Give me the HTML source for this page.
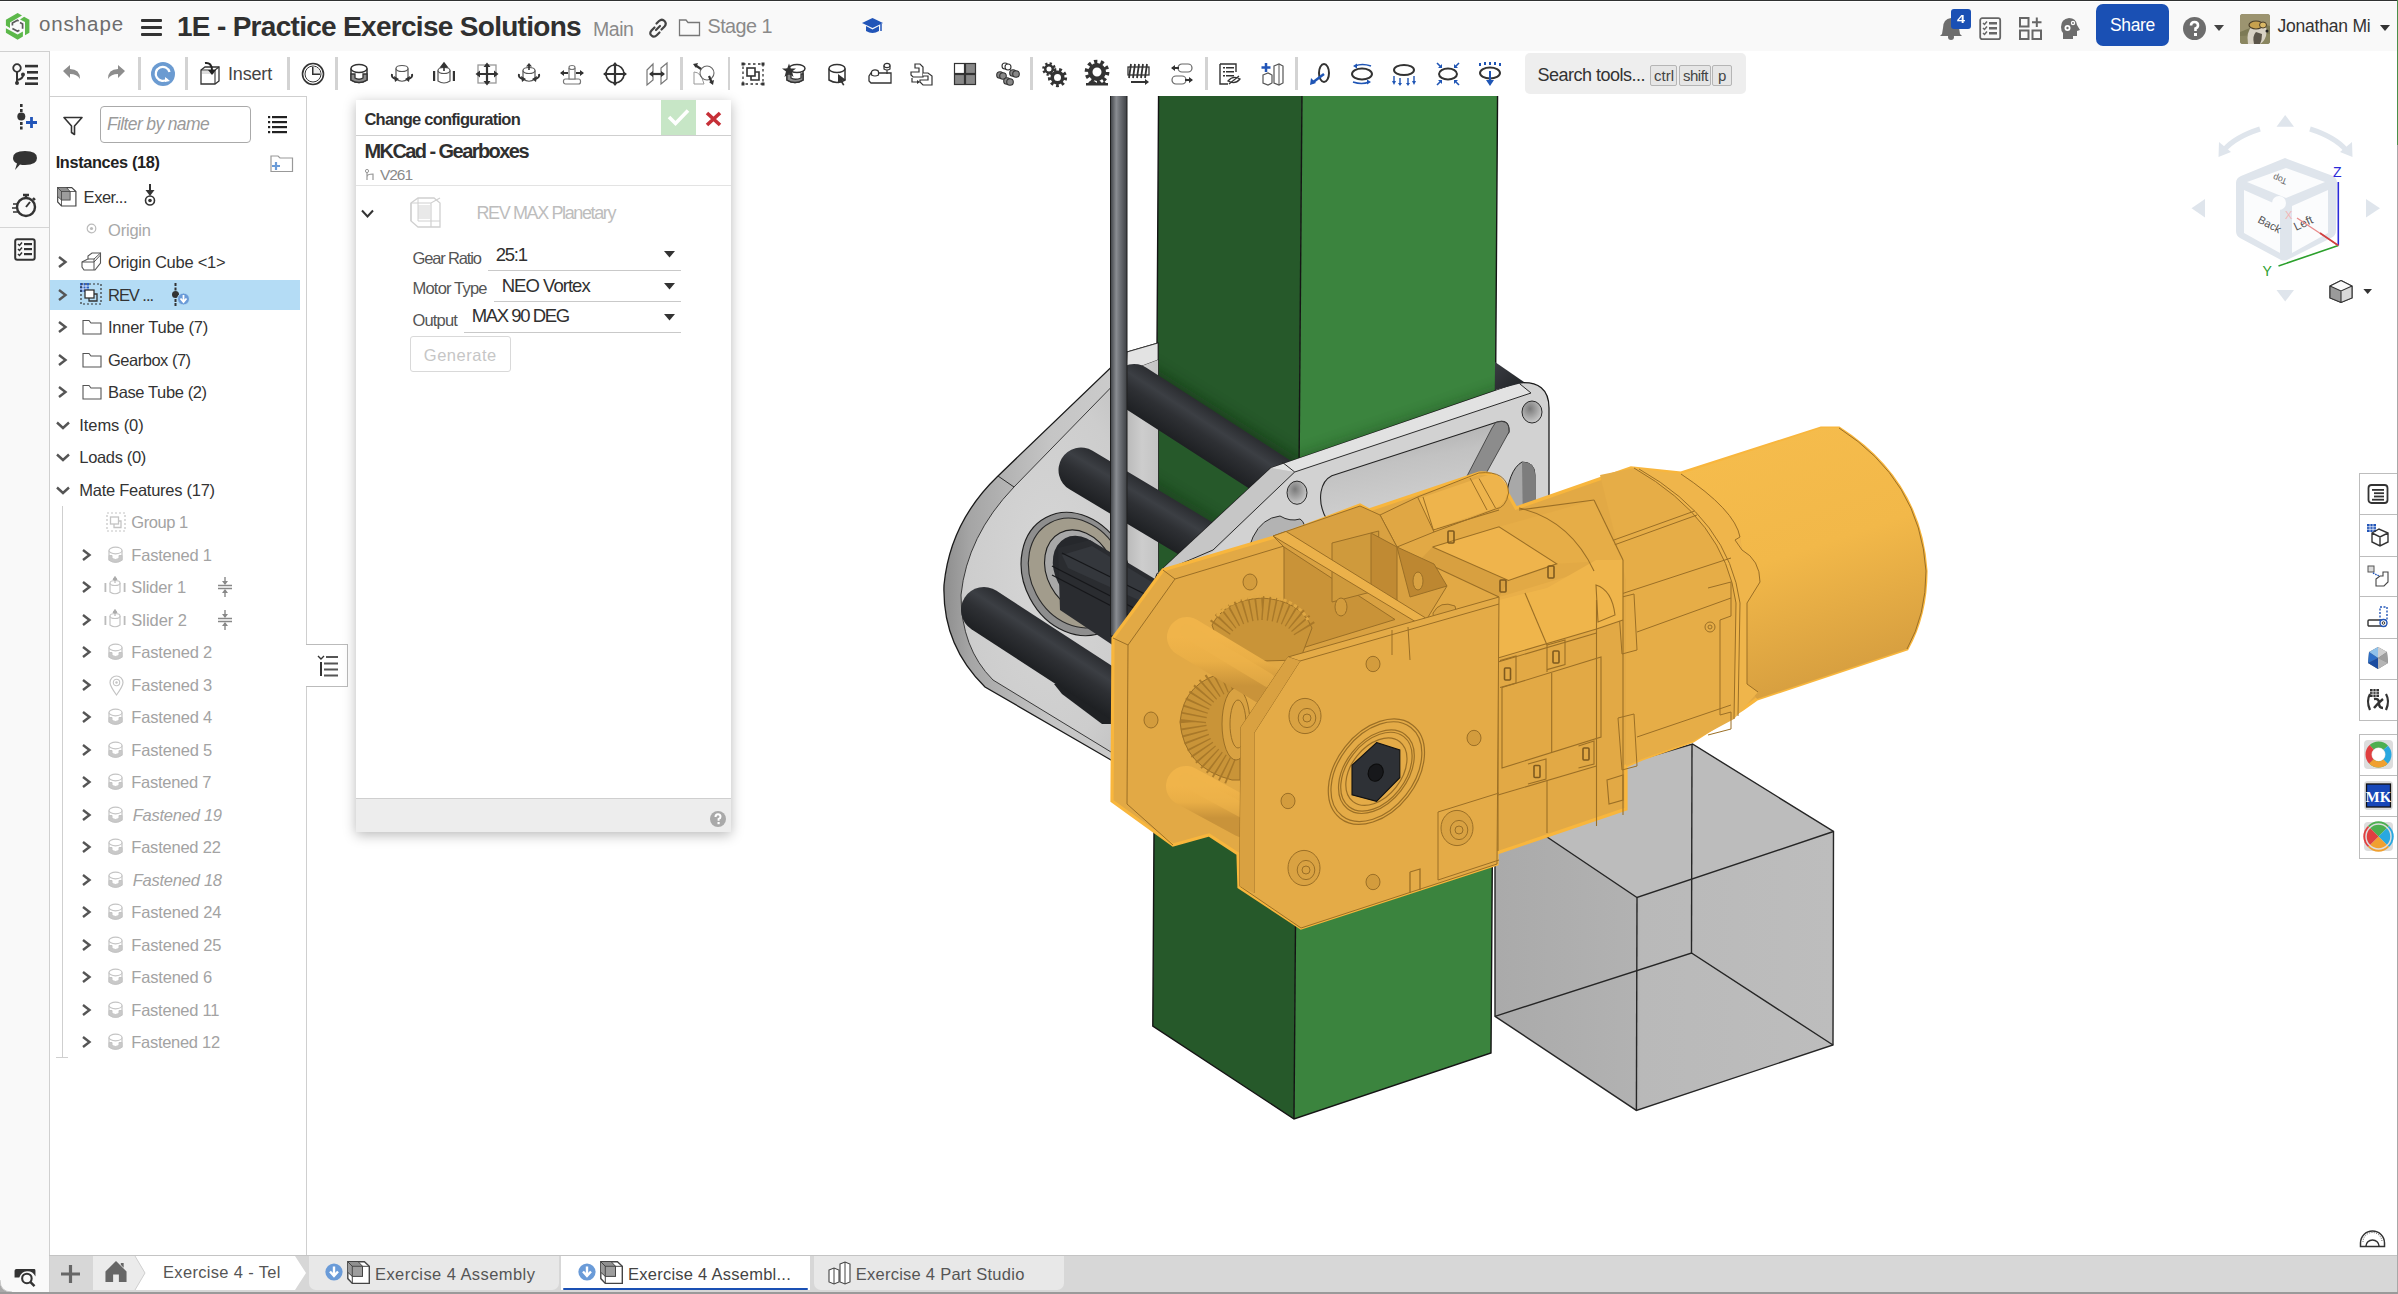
<!DOCTYPE html><html><head><meta charset="utf-8"><style>
html,body{margin:0;padding:0}
body{width:2398px;height:1294px;overflow:hidden;position:relative;background:#fff;font-family:"Liberation Sans", sans-serif}
.t{position:absolute;white-space:nowrap}
svg{overflow:visible}
</style></head><body><svg style="position:absolute;left:0;top:0" width="2398" height="1294"><defs>
<linearGradient id="rod" x1="0" y1="0" x2="1" y2="0"><stop offset="0" stop-color="#3f4246"/><stop offset="0.35" stop-color="#8a8d92"/><stop offset="0.6" stop-color="#6a6d72"/><stop offset="1" stop-color="#3d4044"/></linearGradient>
<linearGradient id="rim" x1="0" y1="0" x2="1" y2="0"><stop offset="0" stop-color="#8e8e8e"/><stop offset="0.12" stop-color="#a5a5a5"/><stop offset="0.5" stop-color="#c5c5c5"/><stop offset="1" stop-color="#cfcfcf"/></linearGradient>
<radialGradient id="face" cx="0.45" cy="0.5" r="0.6"><stop offset="0" stop-color="#d6d6d6"/><stop offset="0.7" stop-color="#cdcdcd"/><stop offset="1" stop-color="#c0c0c0"/></radialGradient>
<linearGradient id="cubeg" x1="0" y1="0" x2="1" y2="0"><stop offset="0" stop-color="#aaaaaa"/><stop offset="0.42" stop-color="#b2b2b2"/><stop offset="0.43" stop-color="#b9b9b9"/><stop offset="1" stop-color="#bdbdbd"/></linearGradient>
<linearGradient id="motor" x1="0" y1="0" x2="0.3" y2="1"><stop offset="0" stop-color="#f6bd4d"/><stop offset="0.55" stop-color="#f2b849"/><stop offset="1" stop-color="#d8a040"/></linearGradient>
<linearGradient id="cut" x1="0" y1="0" x2="0" y2="1"><stop offset="0" stop-color="#9c9c9c"/><stop offset="0.5" stop-color="#c4c4c4"/><stop offset="1" stop-color="#d6d6d6"/></linearGradient>
<linearGradient id="rodg" x1="0" y1="0" x2="0" y2="1"><stop offset="0" stop-color="#2a2c30"/><stop offset="0.5" stop-color="#3b3e43"/><stop offset="1" stop-color="#222427"/></linearGradient>
<linearGradient id="ocyl" x1="0" y1="0" x2="0" y2="1"><stop offset="0" stop-color="#f0b44a"/><stop offset="0.5" stop-color="#e9ae46"/><stop offset="1" stop-color="#c9933a"/></linearGradient>
</defs><polygon points="1495,802 1692.5,744 1833.5,831.5 1833,1045 1636.4,1110.4 1495,1016.3" fill="url(#cubeg)"/><polygon points="1495,802 1692.5,744 1833.5,831.5 1637,897.5" fill="#bcbcbc"/><g stroke="#262626" stroke-width="1.4" fill="none"><polygon points="1495,802 1692.5,744 1833.5,831.5 1833,1045 1636.4,1110.4 1495,1016.3"/><polyline points="1495,802 1637,897.5 1833.5,831.5"/><line x1="1637" y1="897.5" x2="1636.4" y2="1110.4"/><polyline points="1495,1016.3 1691.5,953 1833,1045"/><line x1="1692" y1="744" x2="1691.5" y2="953"/></g><polygon points="1158.6,90 1302,90 1294,1119 1152.8,1026" fill="#26592a"/><polygon points="1302,90 1497.6,90 1491,1053 1294,1119" fill="#3b843e"/><g stroke="#141414" stroke-width="1.4" fill="none"><polyline points="1158.6,90 1152.8,1026 1294,1119 1491,1053 1497.6,90"/><line x1="1302" y1="90" x2="1294" y2="1119"/></g><defs><filter id="blur8" x="-50%" y="-50%" width="200%" height="200%"><feGaussianBlur stdDeviation="7"/></filter><clipPath id="tL"><polygon points="1158.6,90 1302,90 1294,1119 1152.8,1026"/></clipPath><clipPath id="tR"><polygon points="1302,90 1497.6,90 1491,1053 1294,1119"/></clipPath></defs><g clip-path="url(#tL)"><line x1="1140" y1="370" x2="1300" y2="470" stroke="#0c2a0f" stroke-width="18" opacity="0.55" filter="url(#blur8)"/><line x1="1081" y1="445" x2="1230" y2="535" stroke="#0c2a0f" stroke-width="14" opacity="0.45" filter="url(#blur8)"/></g><g clip-path="url(#tR)"><line x1="1290" y1="468" x2="1520" y2="390" stroke="#123a16" stroke-width="16" opacity="0.45" filter="url(#blur8)"/></g><path d="M1158,343 L1127,352 L998,476 Q950,522 944,585 Q942,645 985,687 L1111,760 L1158,788 Z" fill="url(#rim)" stroke="#1a1a1a" stroke-width="1.3"/><path d="M1158,360 L1126,372 L1014,487 Q967,536 961,595 Q961,648 993,680 L1111,752 L1158,780 Z" fill="url(#face)" stroke="#3a3a3a" stroke-width="1"/><path d="M998,476 L1014,487" stroke="#2a2a2a" stroke-width="1"/><polygon points="1127,352 1158,343 1158,360 1126,372" fill="#e3e3e3" stroke="#2a2a2a" stroke-width="0.8"/><defs><linearGradient id="strip" x1="0" y1="0" x2="1" y2="0"><stop offset="0" stop-color="#b9b9b9"/><stop offset="0.5" stop-color="#cdcdcd"/><stop offset="1" stop-color="#c4c4c4"/></linearGradient></defs><polygon points="1126,372 1158,360 1158,800 1126,800" fill="url(#strip)"/><ellipse cx="1076" cy="574" rx="52" ry="64" transform="rotate(-28 1076 574)" fill="#8e8e8e" stroke="#1e1e1e" stroke-width="1.2"/><ellipse cx="1077" cy="573" rx="46" ry="57" transform="rotate(-28 1077 573)" fill="#a29c8c" stroke="#2a2a2a" stroke-width="1.1"/><ellipse cx="1080" cy="571" rx="33" ry="43" transform="rotate(-28 1080 571)" fill="#a8a8a8" stroke="#1e1e1e" stroke-width="1.1"/><ellipse cx="1082" cy="570" rx="27" ry="36" transform="rotate(-28 1082 570)" fill="#26282c"/><polygon points="1058,548 1090,540 1165,585 1165,660 1120,650 1060,610" fill="#2a2c30"/><polygon points="1062,555 1092,546 1165,590 1165,612 1068,568" fill="#34373c"/><g stroke="#16171a" stroke-width="1.3"><line x1="1052" y1="566" x2="1165" y2="624"/><line x1="1052" y1="575" x2="1165" y2="634"/><line x1="1062" y1="553" x2="1165" y2="604"/></g><defs><linearGradient id="rg1" gradientUnits="userSpaceOnUse" x1="1146.5" y1="367.7" x2="1121.5" y2="406.3"><stop offset="0" stop-color="#2b2d31"/><stop offset="0.3" stop-color="#3c3f44"/><stop offset="0.55" stop-color="#2e3034"/><stop offset="1" stop-color="#1e2023"/></linearGradient></defs><line x1="1134" y1="387" x2="1300" y2="494" stroke="url(#rg1)" stroke-width="46" stroke-linecap="round"/><defs><linearGradient id="rg2" gradientUnits="userSpaceOnUse" x1="1092.5" y1="450.7" x2="1069.5" y2="489.3"><stop offset="0" stop-color="#2b2d31"/><stop offset="0.3" stop-color="#3c3f44"/><stop offset="0.55" stop-color="#2e3034"/><stop offset="1" stop-color="#1e2023"/></linearGradient></defs><line x1="1081" y1="470" x2="1230" y2="559" stroke="url(#rg2)" stroke-width="45" stroke-linecap="round"/><polygon points="1054,684 1062,694 1102,724 1112,724 1112,680" fill="#1f2124"/><defs><linearGradient id="rg3" gradientUnits="userSpaceOnUse" x1="996.5" y1="590.7" x2="971.5" y2="629.3"><stop offset="0" stop-color="#2b2d31"/><stop offset="0.3" stop-color="#3c3f44"/><stop offset="0.55" stop-color="#2e3034"/><stop offset="1" stop-color="#1e2023"/></linearGradient></defs><line x1="984" y1="610" x2="1130" y2="705" stroke="url(#rg3)" stroke-width="46" stroke-linecap="round"/><path d="M1271,468 L1518,383 Q1549,380 1549,408 L1549,560 L1300,650 L1130,650 L1157,574 Z" fill="#d2d2d2" stroke="#1a1a1a" stroke-width="1.3"/><polygon points="1271,468 1518,383 1531,393 1294.7,472" fill="#e2e2e2"/><polygon points="1271,468 1294.7,472 1215,550 1157,590 1157,574" fill="#c6c6c6"/><path d="M1282,462 L1294.7,472 L1531,393 L1520,384 M1294.7,472 L1213,550 M1157,574 L1213,550" fill="none" stroke="#2a2a2a" stroke-width="1"/><defs><linearGradient id="cut2" x1="0" y1="0" x2="0.3" y2="1"><stop offset="0" stop-color="#a3a3a3"/><stop offset="0.45" stop-color="#c2c2c2"/><stop offset="1" stop-color="#d3d3d3"/></linearGradient></defs><path d="M1331.8,475.7 L1495.7,422.4 Q1510,418 1509,432 L1472,476 L1420,520 L1335,530 Q1318,512 1321,492 Q1323,480 1331.8,475.7 Z" fill="url(#cut2)" stroke="#222" stroke-width="1.1"/><path d="M1495.7,422.4 Q1510,418 1509,432 L1478,488 L1466,478 L1492,428 Z" fill="#8c8c8c" stroke="#333" stroke-width="0.8"/><path d="M1505.5,505 Q1508,470 1522,462 Q1535,462 1535,475 L1535,530 L1505,530 Z" fill="#a8a8a8" stroke="#222" stroke-width="1"/><path d="M1522,462 Q1535,462 1535,475 L1535,530 L1523,530 Z" fill="#7d7d7d"/><path d="M1253,537 Q1262,518 1280,516 Q1290,522 1300,519 Q1306,522 1307,540 L1250,545 Z" fill="#b3b3b3" stroke="#2a2a2a" stroke-width="1"/><defs><radialGradient id="hole" cx="0.4" cy="0.35" r="0.7"><stop offset="0" stop-color="#7a7a7a"/><stop offset="1" stop-color="#cfcfcf"/></radialGradient></defs><ellipse cx="1297" cy="492.7" rx="10" ry="11.6" fill="url(#hole)" stroke="#2a2a2a" stroke-width="1"/><ellipse cx="1532" cy="412" rx="10" ry="11" fill="url(#hole)" stroke="#2a2a2a" stroke-width="1"/><defs><linearGradient id="rend" x1="0" y1="0" x2="1" y2="1"><stop offset="0" stop-color="#3a3d42"/><stop offset="1" stop-color="#202226"/></linearGradient></defs><polygon points="1495,362 1524,382 1518,384 1495,390" fill="url(#rend)"/><rect x="1110.5" y="90" width="16.5" height="546" fill="url(#rod)" stroke="#1e1e1e" stroke-width="1"/><path d="M1163,570 L1113,638 L1112,801 L1173,845 L1209,835 L1238,854 L1239,887 L1301,928 L1497,864 L1497,853 L1626,809 L1626,766 L1642,759 L1693,741 L1743,709 L1757,699 L1907,649 Q1926,615 1926,571 Q1920,480 1839,428 L1821,428 L1681,473 L1631,468 L1516,508 L1508,494 Q1503,472 1479,473 L1369,510 L1360,505 L1278,536 Z" fill="#e2a945" stroke="#f8b63d" stroke-width="3.2"/><path d="M1681,474 L1821,428 L1839,428 Q1920,480 1926,571 Q1926,615 1907,649 L1757,699 L1747,684 L1747,603 L1760,582 Q1760,560 1742,550 L1740,537 Q1735,510 1681,474 Z" fill="url(#motor)"/><path d="M1839,428 Q1920,480 1926,571 Q1926,615 1907,649" fill="none" stroke="#9b6f26" stroke-width="1"/><path d="M1600,475 L1634,468 Q1725,520 1736,603 L1734,719 L1693,741 L1642,759 L1626,766 L1626,580 Z" fill="#e6ad47"/><path d="M1634,468 L1681,474 Q1735,510 1740,537 L1742,550 Q1760,560 1760,582 L1747,603 L1747,684 L1758,692 L1734,719 L1736,603 Q1725,520 1634,468 Z" fill="#efb54b"/><g fill="none" stroke="#9b6f26" stroke-width="1"><path d="M1634,468 Q1725,520 1736,603 L1734,719"/><path d="M1639,469 Q1729,520 1740,603 L1738,716"/><path d="M1681,474 Q1735,510 1740,537 L1735,540 L1742,550 Q1760,560 1760,582 L1747,603 L1747,684 L1758,692"/><line x1="1600" y1="545" x2="1694.6" y2="511"/><line x1="1603" y1="549" x2="1697" y2="515"/><line x1="1618" y1="595" x2="1731" y2="558"/><line x1="1637" y1="632" x2="1731" y2="598"/><line x1="1637" y1="737" x2="1731" y2="705"/><path d="M1618,598 L1634,594 L1637,650 L1622,654 Z M1618,718 L1634,714 L1637,766 L1622,770 Z M1708,588 L1731,582 L1731,616 L1720,620 L1720,715 L1731,712 L1731,729 L1708,735"/><circle cx="1710" cy="627" r="5"/><circle cx="1710" cy="627" r="2"/></g><polygon points="1499,597 1622,560 1622,619 1547,645 1499,659" fill="#e9af49"/><polygon points="1432.5,547 1499,526.8 1556.7,563.8 1508.5,580.5" fill="#efb44c"/><polygon points="1420,560 1432.5,547 1508.5,580.5 1499,597" fill="#d8a040"/><polygon points="1499,526.8 1594,500 1622,560 1556.7,563.8" fill="#e6ad47"/><polygon points="1499,600 1547,588 1596,560 1623,560 1623,620 1596.5,629 1498,658" fill="#efb54b"/><g fill="none" stroke="#9b6f26" stroke-width="1.1"><polyline points="1498,597 1498,851"/><line x1="1596.5" y1="600" x2="1596.5" y2="826"/><line x1="1623" y1="560" x2="1623" y2="815"/><line x1="1525" y1="593" x2="1547" y2="645"/><line x1="1498" y1="658" x2="1596.5" y2="629"/><line x1="1498" y1="662" x2="1596.5" y2="633"/><line x1="1596.5" y1="629" x2="1623" y2="620"/><polygon points="1502,687.5 1601,657 1601,737 1502,768"/><line x1="1551.7" y1="673" x2="1551.7" y2="752"/><line x1="1547" y1="645" x2="1547" y2="672"/><line x1="1498" y1="795" x2="1596.5" y2="766"/><line x1="1547" y1="781" x2="1547" y2="833"/><polyline points="1500,660.6 1516,656 1516,683 1500,687.5"/><polyline points="1547,645 1565,640 1565,664.6 1547,669.6"/><polyline points="1578.5,746 1594,741 1594,764 1578.5,768"/><polyline points="1528,764 1546,759 1546,779 1528,784"/><polyline points="1432.5,547 1499,526.8 1556.7,563.8 1508.5,580.5 1432.5,547"/><line x1="1420" y1="560" x2="1499" y2="597"/><line x1="1400" y1="540" x2="1499" y2="510"/><line x1="1519" y1="510" x2="1594" y2="500"/><line x1="1594" y1="500" x2="1623" y2="560"/><path d="M1519,508 Q1570,520 1594,571"/><path d="M1596,585 Q1612,590 1615,615 L1598,622 Z"/><path d="M1607,780 L1623,775 L1623,800 L1609,804 Z"/></g><rect x="1448" y="531" width="6" height="12" rx="1" fill="none" stroke="#7f5a1e" stroke-width="1.6"/><rect x="1500" y="580" width="6" height="12" rx="1" fill="none" stroke="#7f5a1e" stroke-width="1.6"/><rect x="1548" y="566" width="6" height="12" rx="1" fill="none" stroke="#7f5a1e" stroke-width="1.6"/><rect x="1504.5" y="668" width="6" height="12" rx="1" fill="none" stroke="#7f5a1e" stroke-width="1.6"/><rect x="1553" y="651" width="6" height="12" rx="1" fill="none" stroke="#7f5a1e" stroke-width="1.6"/><rect x="1583" y="748" width="6" height="12" rx="1" fill="none" stroke="#7f5a1e" stroke-width="1.6"/><rect x="1534" y="765.5" width="6" height="12" rx="1" fill="none" stroke="#7f5a1e" stroke-width="1.6"/><line x1="1426" y1="514" x2="1490" y2="492" stroke="#eeb44c" stroke-width="34" stroke-linecap="round"/><path d="M1417.6,497 L1478.8,473 Q1508,470 1508.5,493 Q1506,508 1495.5,509 L1434,532" fill="none" stroke="#9b6f26" stroke-width="1"/><path d="M1423,497 L1434,532 M1479,478.5 L1495.5,508 M1470,478 L1487,510" fill="none" stroke="#9b6f26" stroke-width="1"/><path d="M1380,515 L1417.6,497 L1434,532 L1397,547 Z" fill="#e0a744" stroke="#9b6f26" stroke-width="1"/><g fill="none" stroke="#9b6f26" stroke-width="1"><polyline points="1163,570 1175,579 1128,645 1127,804 1173,845"/><line x1="1113" y1="638" x2="1128" y2="645"/><line x1="1175" y1="579" x2="1284" y2="546"/></g><ellipse cx="1151" cy="720" rx="7" ry="8" fill="#d39c3d" stroke="#9b6f26" stroke-width="1"/><ellipse cx="1250" cy="582" rx="7" ry="8" fill="#d39c3d" stroke="#9b6f26" stroke-width="1"/><path d="M1273,536 L1360,506 L1369,510 L1380,515 L1397,547 L1447,586 L1425,622 L1300,660 L1284,547 Z" fill="#d9a141" stroke="#9b6f26" stroke-width="1"/><polygon points="1284,547 1395,619.5 1304.5,647.3 1284,627" fill="#c99338" stroke="#9b6f26" stroke-width="1"/><polygon points="1332,543 1378.7,531 1378.7,590 1332,602" fill="#cf9a3c" stroke="#9b6f26" stroke-width="1"/><polygon points="1371,533 1397,547 1397,600 1371,590" fill="#c08a33" stroke="#9b6f26" stroke-width="1"/><polygon points="1273,536 1286,531.4 1425,617.6 1421,625" fill="#ebb14a" stroke="#9b6f26" stroke-width="1"/><polygon points="1397,547 1434,564 1447,586 1410,597" fill="#bd8731" stroke="#9b6f26" stroke-width="1"/><ellipse cx="1418" cy="581" rx="5" ry="9" fill="#d9a242" stroke="#9b6f26" stroke-width="1"/><ellipse cx="1341" cy="607" rx="6" ry="9" fill="#d39c3d" stroke="#9b6f26" stroke-width="1"/><path d="M1433,613 Q1440,600 1455,606 L1462,640 Q1450,660 1436,645 Z" fill="#d9a242" stroke="#9b6f26" stroke-width="1"/><circle cx="1459" cy="632" r="7" fill="none" stroke="#9b6f26"/><path d="M1212,625 Q1225,600 1262,598 Q1300,600 1312,628 L1300,660 L1225,662 Z" fill="#c99438" stroke="#9b6f26" stroke-width="1"/><path d="M1220,628 Q1232,610 1262,608 Q1294,610 1305,630" fill="none" stroke="#a57628" stroke-width="24" stroke-dasharray="1.6,4.4" opacity="0.9"/><path d="M1217,616 Q1232,598 1262,596 Q1296,598 1308,620" fill="none" stroke="#e0a843" stroke-width="3" stroke-dasharray="3.5,2.5"/><path d="M1228,672 Q1184,680 1180,722 Q1184,768 1232,780 L1240,780 L1240,672 Z" fill="#c99438" stroke="#9b6f26" stroke-width="1"/><path d="M1230,678 Q1196,688 1193,722 Q1196,758 1232,772" fill="none" stroke="#a57628" stroke-width="26" stroke-dasharray="1.6,4.4" opacity="0.9"/><ellipse cx="1236" cy="724" rx="14" ry="36" fill="#d9a242" stroke="#9b6f26" stroke-width="1"/><ellipse cx="1238" cy="724" rx="8" ry="24" fill="none" stroke="#9b6f26" stroke-width="1"/><line x1="1187" y1="637" x2="1268" y2="686" stroke="url(#ocyl)" stroke-width="40" stroke-linecap="round"/><line x1="1187" y1="631" x2="1268" y2="680" stroke="#efb44b" stroke-width="14" stroke-linecap="round" opacity="0.55"/><line x1="1186" y1="786" x2="1245" y2="818" stroke="url(#ocyl)" stroke-width="40" stroke-linecap="round"/><line x1="1186" y1="780" x2="1245" y2="812" stroke="#efb44b" stroke-width="14" stroke-linecap="round" opacity="0.55"/><path d="M1288,657 L1241,727 L1239.5,886 L1301,928 L1497,864 L1499,597 Z" fill="#e4ab47" stroke="#9b6f26" stroke-width="1"/><path d="M1288,657 L1300,661 L1254,733 L1254,893 M1300,661 L1499,604" fill="none" stroke="#9b6f26" stroke-width="1"/><polygon points="1288,657 1300,661 1254,733 1254,893 1239.5,886 1241,727" fill="#d9a141"/><g fill="none" stroke="#9b6f26" stroke-width="1.2"><ellipse cx="1376.4" cy="771.7" rx="40" ry="59" transform="rotate(38 1376.4 771.7)"/><ellipse cx="1376.4" cy="771.7" rx="37.5" ry="56" transform="rotate(38 1376.4 771.7)"/><ellipse cx="1376.4" cy="771.7" rx="31" ry="47" transform="rotate(38 1376.4 771.7)"/><ellipse cx="1376.4" cy="771.7" rx="29" ry="44.5" transform="rotate(38 1376.4 771.7)"/><ellipse cx="1376.4" cy="771.7" rx="25" ry="38" transform="rotate(38 1376.4 771.7)"/></g><polygon points="1376.6,742.5 1399.8,750 1399.8,777.7 1376.6,801.4 1352,794.9 1352,765.2" fill="#2e3136" stroke="#111" stroke-width="1.1"/><ellipse cx="1375.7" cy="772.6" rx="7.4" ry="8.8" transform="rotate(20 1375.7 772.6)" fill="#17181b" stroke="#0c0c0c" stroke-width="1"/><ellipse cx="1305" cy="716" rx="16" ry="17.6" fill="#d9a242" stroke="#9b6f26" stroke-width="1"/><ellipse cx="1307" cy="718" rx="8.8" ry="9.6" fill="none" stroke="#9b6f26" stroke-width="1"/><circle cx="1307" cy="718" r="4.0" fill="none" stroke="#9b6f26"/><ellipse cx="1457" cy="828" rx="16" ry="17.6" fill="#d9a242" stroke="#9b6f26" stroke-width="1"/><ellipse cx="1459" cy="830" rx="8.8" ry="9.6" fill="none" stroke="#9b6f26" stroke-width="1"/><circle cx="1459" cy="830" r="4.0" fill="none" stroke="#9b6f26"/><ellipse cx="1304" cy="868" rx="16" ry="17.6" fill="#d9a242" stroke="#9b6f26" stroke-width="1"/><ellipse cx="1306" cy="870" rx="8.8" ry="9.6" fill="none" stroke="#9b6f26" stroke-width="1"/><circle cx="1306" cy="870" r="4.0" fill="none" stroke="#9b6f26"/><ellipse cx="1373" cy="664" rx="7" ry="7.700000000000001" fill="#d39c3d" stroke="#9b6f26" stroke-width="1"/><ellipse cx="1474" cy="738" rx="7" ry="7.700000000000001" fill="#d39c3d" stroke="#9b6f26" stroke-width="1"/><ellipse cx="1288" cy="801" rx="7" ry="7.700000000000001" fill="#d39c3d" stroke="#9b6f26" stroke-width="1"/><ellipse cx="1373" cy="882" rx="7" ry="7.700000000000001" fill="#d39c3d" stroke="#9b6f26" stroke-width="1"/><path d="M1410,872 L1420,869 L1420,890 M1410,872 L1410,893" fill="none" stroke="#9b6f26" stroke-width="1.3"/><path d="M1438,812 L1438,880 L1499,860 M1438,812 L1499,793" fill="none" stroke="#9b6f26" stroke-width="1"/><path d="M1408,627 L1410,660 M1392,630 L1392,655" fill="none" stroke="#9b6f26" stroke-width="1"/></svg><div style="position:absolute;left:0px;top:0px;width:2398px;height:51px;background:#f9f9f9"></div><div style="position:absolute;left:0px;top:0px;width:2398px;height:1px;background:#303232"></div><div style="position:absolute;left:0px;top:1px;width:2398px;height:1px;background:#fff"></div><svg style="position:absolute;left:0px;top:8px;" width="40" height="38" viewBox="0 8 40 38"><g fill="#5cb84a"><polygon points="5.9,19.7 17.6,13 22,15.5 10,22.4 10,28 5.9,25.6"/><polygon points="20,19.5 24.1,16.8 29.4,19.7 29.4,32.7 25,35.3 25,22.1"/><polygon points="5.9,28.3 17.6,34.4 22.9,31.6 22.9,36.5 17.6,39.7 5.9,32.7"/></g>
<g fill="none" stroke="#5a5a5a" stroke-width="1.7" stroke-linejoin="miter"><polyline points="12.4,25.4 12.4,23 17.4,20.3 18.6,21"/><polyline points="20,22.6 22.6,24.1 22.6,28.8"/><polyline points="12.4,28.4 17.6,31.3 19.4,30.3"/></g></svg><div class="t" style="left:39px;top:14.1px;font-size:20.5px;line-height:20.5px;color:#6d6d6d;font-weight:normal;font-style:normal;letter-spacing:0.9058370535714276px;">onshape</div><div style="position:absolute;left:141px;top:19px;width:21px;height:3.3px;background:#333;border-radius:1px"></div><div style="position:absolute;left:141px;top:26px;width:21px;height:3.3px;background:#333;border-radius:1px"></div><div style="position:absolute;left:141px;top:33px;width:21px;height:3.3px;background:#333;border-radius:1px"></div><div class="t" style="left:177px;top:13.3px;font-size:28px;line-height:28px;color:#303030;font-weight:bold;font-style:normal;letter-spacing:-0.7007031250000004px;">1E - Practice Exercise Solutions</div><div class="t" style="left:593px;top:19.5px;font-size:19.5px;line-height:19.5px;color:#8a8a8a;font-weight:normal;font-style:normal;letter-spacing:-0.4419433593749993px;">Main</div><svg style="position:absolute;left:647px;top:17px;" width="22" height="22" viewBox="0 0 22 22"><g fill="none" stroke="#444" stroke-width="2.2" stroke-linecap="round"><path d="M9,13 L13,9"/><path d="M7.5,10.5 L4.5,13.5 Q2,16.5 4.5,18.5 Q7,21 10,18 L12.5,15.5"/><path d="M9.5,6.5 L12,4 Q15,1.5 17.5,4 Q20,6.5 17.5,9.5 L14.5,12.5"/></g></svg><svg style="position:absolute;left:678px;top:17px;" width="23" height="20" viewBox="0 0 23 20"><path d="M1.5,3 L8,3 L10,5.5 L21.5,5.5 L21.5,18.5 L1.5,18.5 Z" fill="none" stroke="#777" stroke-width="1.3"/></svg><div class="t" style="left:707.5px;top:17.4px;font-size:19.8px;line-height:19.8px;color:#8a8a8a;font-weight:normal;font-style:normal;letter-spacing:-0.5367723214285718px;">Stage 1</div><svg style="position:absolute;left:861px;top:16px;" width="23" height="21" viewBox="0 0 23 21"><path d="M11.5,2 L22,7 L11.5,12 L1,7 Z" fill="#2255b8"/><path d="M5,10 L5,15 Q11.5,19 18,15 L18,10 L11.5,13.5 Z" fill="#2255b8"/><path d="M20,8 L20,15" stroke="#2255b8" stroke-width="1.5"/></svg><svg style="position:absolute;left:1939px;top:16px;" width="24" height="24" viewBox="0 0 24 24"><path d="M12,2 Q4,3 4,12 L3,18 L1,20 L23,20 L21,18 L20,12 Q20,3 12,2 Z" fill="#6d6d6d"/><circle cx="12" cy="21" r="3" fill="#6d6d6d"/></svg><div style="position:absolute;left:1951px;top:9px;width:20px;height:20px;background:#1a50b4;border-radius:3px"></div><div class="t" style="left:1957px;top:13.6px;font-size:11.5px;line-height:11.5px;color:#fff;font-weight:bold;font-style:normal;letter-spacing:0px;transform:scaleX(1.2508);transform-origin:0 0;">4</div><svg style="position:absolute;left:1979px;top:17px;" width="23" height="23" viewBox="0 0 23 23"><rect x="1.2" y="1.2" width="20" height="21" rx="2" fill="none" stroke="#666" stroke-width="1.8"/><g stroke="#666" stroke-width="1.5" fill="none"><path d="M4,6 L5.5,7.5 L8,4.5 M4,11 L5.5,12.5 L8,9.5 M4,16 L5.5,17.5 L8,14.5"/></g><g fill="#666"><rect x="10" y="5" width="8" height="2.5"/><rect x="10" y="10" width="8" height="2.5"/><rect x="10" y="15" width="8" height="2.5"/></g></svg><svg style="position:absolute;left:2019px;top:17px;" width="24" height="24" viewBox="0 0 24 24"><g fill="none" stroke="#666" stroke-width="2"><rect x="1" y="1" width="8.5" height="8.5"/><rect x="1" y="13.5" width="8.5" height="8.5"/><rect x="13.5" y="13.5" width="8.5" height="8.5"/><path d="M17.8,0.5 L17.8,10 M13,5.2 L22.5,5.2"/></g></svg><svg style="position:absolute;left:2060px;top:17px;" width="22" height="23" viewBox="0 0 22 23"><path d="M9,1 Q1,2 1,10 Q1,14 3,16 L3,22 L13,22 L13,19 L17,19 L17,14 L20,13 L17,8 Q16,1 9,1 Z" fill="#6d6d6d"/><circle cx="7.5" cy="11" r="3" fill="#fff"/><circle cx="7.5" cy="11" r="1.2" fill="#6d6d6d"/><circle cx="13" cy="6" r="2.2" fill="#fff"/><circle cx="13" cy="6" r="0.9" fill="#6d6d6d"/></svg><div style="position:absolute;left:2096px;top:4px;width:73px;height:42px;background:#1a50b4;border-radius:7px"></div><div class="t" style="left:2110px;top:17.4px;font-size:17.5px;line-height:17.5px;color:#fff;font-weight:normal;font-style:normal;letter-spacing:-0.34007812499999945px;">Share</div><svg style="position:absolute;left:2183px;top:17px;" width="23" height="23" viewBox="0 0 23 23"><circle cx="11.5" cy="11.5" r="11.5" fill="#6d6d6d"/><path d="M8,8.5 Q8,5 11.5,5 Q15,5 15,8.3 Q15,10.5 12.5,11.5 L12.5,14" fill="none" stroke="#fff" stroke-width="2.6"/><rect x="11" y="16" width="3" height="3" fill="#fff"/></svg><svg style="position:absolute;left:2214px;top:25px;" width="11" height="6" viewBox="0 0 11 6"><path d="M0,0 L10,0 L5,6 Z" fill="#444"/></svg><svg style="position:absolute;left:2240px;top:14px;" width="30" height="30" viewBox="0 0 30 30"><defs><clipPath id="avc"><rect x="0" y="0" width="30" height="30" rx="3"/></clipPath></defs><g clip-path="url(#avc)"><rect width="30" height="30" fill="#7d7a55"/><path d="M0,0 L30,0 L30,12 Q20,8 10,14 L0,18 Z" fill="#9c9470"/><path d="M0,22 L30,20 L30,30 L0,30 Z" fill="#8a8660"/><path d="M8,30 Q6,18 12,12 Q18,6 24,10 Q28,14 26,22 Q24,28 20,30 Z" fill="#d8d2c4"/><path d="M14,30 Q12,22 16,18 L22,20 Q22,26 20,30 Z" fill="#5b5549"/><ellipse cx="16" cy="11" rx="7" ry="4" fill="#c7a14e" stroke="#4b3f2a" stroke-width="1.2"/><ellipse cx="23" cy="11" rx="3.5" ry="3" fill="#d9b865" stroke="#4b3f2a" stroke-width="1"/><circle cx="27" cy="17" r="1.5" fill="#222"/></g></svg><div class="t" style="left:2277.5px;top:18.4px;font-size:17.5px;line-height:17.5px;color:#333;font-weight:normal;font-style:normal;letter-spacing:-0.2125532670454543px;">Jonathan Mi</div><svg style="position:absolute;left:2380px;top:25px;" width="11" height="6" viewBox="0 0 11 6"><path d="M0,0 L10,0 L5,6 Z" fill="#333"/></svg><div style="position:absolute;left:2397px;top:0px;width:1px;height:145px;background:#4a8f4a"></div><div style="position:absolute;left:2397px;top:145px;width:1px;height:1149px;background:#a8a8a8"></div><div style="position:absolute;left:50px;top:51px;width:2346px;height:45px;background:#fff"></div><div style="position:absolute;left:0px;top:51px;width:49px;height:1243px;background:#f9f9f9;border-top:1px solid #d0d0d0;box-sizing:border-box"></div><div style="position:absolute;left:49px;top:51px;width:1px;height:1243px;background:#d0d0d0"></div><svg style="position:absolute;left:0px;top:1280px;" width="12" height="14" viewBox="0 0 12 14"><path d="M0,0 Q0,12 12,12 L12,14 L0,14 Z" fill="#a9a9a9"/><path d="M0,0 Q0,12 12,12" fill="none" stroke="#c8c8c8" stroke-width="1"/></svg><svg style="position:absolute;left:12px;top:63px;" width="26" height="22" viewBox="0 0 26 22"><circle cx="5" cy="5" r="3.8" fill="none" stroke="#333" stroke-width="1.8"/><path d="M5,9 L5,20 M5,17 Q11,16 11,12" fill="none" stroke="#333" stroke-width="2"/><circle cx="5" cy="20" r="2" fill="#333"/><circle cx="11" cy="11.5" r="2" fill="#333"/><g fill="#333"><rect x="13" y="1.8" width="13" height="2.6"/><rect x="15" y="8" width="11" height="2.6"/><rect x="15" y="14" width="11" height="2.6"/><rect x="13" y="19.4" width="13" height="2.6"/></g></svg><svg style="position:absolute;left:59.5px;top:61.5px;" width="24" height="24" viewBox="0 0 24 24"><path d="M3,9 L10,3 L10,7 Q20,7 20,17 Q17,12 10,12 L10,16 Z" fill="#8d8d8d"/></svg><svg style="position:absolute;left:103.5px;top:61.5px;" width="24" height="24" viewBox="0 0 24 24"><path d="M21,9 L14,3 L14,7 Q4,7 4,17 Q7,12 14,12 L14,16 Z" fill="#8d8d8d"/></svg><div style="position:absolute;left:138px;top:57px;width:2.5px;height:33px;background:#d3d3d3"></div><svg style="position:absolute;left:150.5px;top:61.5px;" width="24" height="24" viewBox="0 0 24 24"><circle cx="12" cy="12" r="12" fill="#6b9bd1"/><path d="M16.5,17 A7,7 0 1 1 18.5,10" fill="none" stroke="#fff" stroke-width="2.3"/><path d="M14,15 L19,19 L14,20 Z" fill="#fff"/></svg><div style="position:absolute;left:185px;top:57px;width:2.5px;height:33px;background:#d3d3d3"></div><svg style="position:absolute;left:199px;top:61px;" width="22" height="24" viewBox="0 0 22 24"><path d="M2,9 L6,6 L20,6 L20,20 L16,23 L2,23 Z" fill="#fff" stroke="#333" stroke-width="1.3"/><path d="M2,9 L16,9 L16,23 M16,9 L20,6" fill="none" stroke="#333" stroke-width="1.1"/><rect x="3" y="10" width="12" height="3" fill="#ddd"/><path d="M6,2 Q13,1 13,10" fill="none" stroke="#222" stroke-width="2"/><path d="M9,9 L13,14 L17,9 Z" fill="#222"/></svg><div class="t" style="left:228px;top:65.1px;font-size:18px;line-height:18px;color:#444;font-weight:normal;font-style:normal;letter-spacing:-0.16971354166666686px;">Insert</div><div style="position:absolute;left:287px;top:57px;width:2.5px;height:33px;background:#d3d3d3"></div><svg style="position:absolute;left:300.5px;top:61.5px;" width="24" height="24" viewBox="0 0 24 24"><circle cx="12" cy="12" r="10.5" fill="#fff" stroke="#333" stroke-width="1.6"/><path d="M12,5 L12,12 L19,12" fill="none" stroke="#333" stroke-width="2"/><circle cx="12" cy="12" r="8" fill="none" stroke="#333" stroke-width="1"/><path d="M12.5,4.5 A7.5,7.5 0 0 1 19.5,11.5 L12.5,11.5 Z" fill="#eee"/></svg><div style="position:absolute;left:335px;top:57px;width:2.5px;height:33px;background:#d3d3d3"></div><svg style="position:absolute;left:347.0px;top:61.5px;" width="24" height="24" viewBox="0 0 24 24"><path d="M4,6.5 L4,18 Q12,23 20,18 L20,6.5" fill="none" stroke="#333" stroke-width="1.5"/><path d="M4,12 L4,18 Q12,23 20,18 L20,12 L16,12 L16,16 Q12,18.5 8,16 L8,12 Z" fill="#8c8c8c" stroke="#333" stroke-width="1.3"/><ellipse cx="12" cy="6.5" rx="8" ry="4" fill="#fff" stroke="#333" stroke-width="1.5"/></svg><svg style="position:absolute;left:390.0px;top:61.5px;" width="24" height="24" viewBox="0 0 24 24"><path d="M6,6.5 L6,17 Q12,21.5 18,17 L18,6.5" fill="none" stroke="#555" stroke-width="1.2"/><ellipse cx="12" cy="6.5" rx="6" ry="3" fill="#fff" stroke="#555" stroke-width="1.2"/><path d="M2,12 Q1,16 6,17 M22,12 Q23,16 18,17" fill="none" stroke="#333" stroke-width="2"/><path d="M4,14 L9,17 L5,20 Z M20,14 L15,17 L19,20 Z" fill="#333"/></svg><svg style="position:absolute;left:432.0px;top:61.5px;" width="24" height="24" viewBox="0 0 24 24"><path d="M6,8.5 L6,19 Q12,23 18,19 L18,8.5" fill="none" stroke="#555" stroke-width="1.2"/><ellipse cx="12" cy="8.5" rx="6" ry="3" fill="#fff" stroke="#555" stroke-width="1.2"/><path d="M12,9 L12,3 M9,5 L12,1 L15,5 Z" fill="#333" stroke="#333" stroke-width="1.6"/><rect x="1" y="9" width="2.2" height="10" fill="#333"/><rect x="20.8" y="9" width="2.2" height="10" fill="#333"/></svg><svg style="position:absolute;left:475.0px;top:61.5px;" width="24" height="24" viewBox="0 0 24 24"><rect x="3" y="3" width="18" height="18" fill="none" stroke="#999" stroke-width="1.3"/><path d="M12,2 L12,22 M2,12 L22,12" stroke="#333" stroke-width="2.2"/><path d="M12,0.5 L8.5,5 L15.5,5 Z M12,23.5 L8.5,19 L15.5,19 Z M0.5,12 L5,8.5 L5,15.5 Z M23.5,12 L19,8.5 L19,15.5 Z" fill="#333"/></svg><svg style="position:absolute;left:517.0px;top:61.5px;" width="24" height="24" viewBox="0 0 24 24"><path d="M6,8.5 L6,17 Q12,21.5 18,17 L18,8.5" fill="none" stroke="#555" stroke-width="1.2"/><ellipse cx="12" cy="8.5" rx="6" ry="3" fill="#fff" stroke="#555" stroke-width="1.2"/><path d="M12,8 L12,3" stroke="#333" stroke-width="1.6"/><path d="M9,4.5 L12,1 L15,4.5 Z" fill="#333"/><path d="M2,12 Q1,16 6,17 M22,12 Q23,16 18,17" fill="none" stroke="#333" stroke-width="2"/><path d="M4,14 L9,17 L5,20 Z M20,14 L15,17 L19,20 Z" fill="#333"/></svg><svg style="position:absolute;left:560.0px;top:61.5px;" width="24" height="24" viewBox="0 0 24 24"><rect x="3.5" y="17" width="17" height="5" rx="2" fill="#fff" stroke="#777" stroke-width="1.2"/><path d="M9,6 L9,17 L15,17 L15,6" fill="#fff" stroke="#777" stroke-width="1.2"/><ellipse cx="12" cy="5.5" rx="3" ry="2" fill="#fff" stroke="#777" stroke-width="1.2"/><path d="M1,11 L8,11 M16,11 L23,11" stroke="#333" stroke-width="2"/><path d="M0,11 L4,8 L4,14 Z M24,11 L20,8 L20,14 Z" fill="#333"/></svg><svg style="position:absolute;left:602.5px;top:61.5px;" width="24" height="24" viewBox="0 0 24 24"><circle cx="12" cy="12" r="9" fill="none" stroke="#333" stroke-width="1.6"/><path d="M12,1 L12,23 M1,12 L23,12" stroke="#333" stroke-width="2.2"/><path d="M12,0 L9,4 L15,4 Z M12,24 L9,20 L15,20 Z M0,12 L4,9 L4,15 Z M24,12 L20,9 L20,15 Z" fill="#333"/></svg><svg style="position:absolute;left:645.0px;top:61.5px;" width="24" height="24" viewBox="0 0 24 24"><path d="M2,8 L8,2 L8,18 L2,23 Z M16,6 L22,1 L22,17 L16,22 Z" fill="#fff" stroke="#777" stroke-width="1.2"/><path d="M5,12 L19,12" stroke="#333" stroke-width="2.2"/><path d="M4,12 L8,9 L8,15 Z M20,12 L16,9 L16,15 Z" fill="#333"/></svg><div style="position:absolute;left:680px;top:57px;width:2.5px;height:33px;background:#d3d3d3"></div><svg style="position:absolute;left:692.0px;top:61.5px;" width="24" height="24" viewBox="0 0 24 24"><path d="M2,10 Q9,10 12,22 L2,22 Z" fill="#fff" stroke="#999" stroke-width="1"/><circle cx="15" cy="11" r="7" fill="none" stroke="#666" stroke-width="1.1"/><path d="M3,3 L9,7 M17,14 L20,21" stroke="#333" stroke-width="2.2"/><path d="M1,2 L6,1 L4,6 Z M21,23 L17,20 L22,18 Z" fill="#333"/></svg><div style="position:absolute;left:727.5px;top:57px;width:2.5px;height:33px;background:#d3d3d3"></div><svg style="position:absolute;left:741.0px;top:61.5px;" width="24" height="24" viewBox="0 0 24 24"><rect x="2" y="2" width="20" height="20" fill="none" stroke="#333" stroke-width="1.3" stroke-dasharray="2.5,2.5"/><g fill="#333"><rect x="0.5" y="0.5" width="3" height="3"/><rect x="20.5" y="0.5" width="3" height="3"/><rect x="0.5" y="20.5" width="3" height="3"/><rect x="20.5" y="20.5" width="3" height="3"/></g><rect x="6" y="6" width="8" height="8" fill="#fff" stroke="#333" stroke-width="1.6"/><path d="M14,10 L18,10 L18,18 L10,18 L10,14" fill="none" stroke="#333" stroke-width="1.6"/></svg><svg style="position:absolute;left:783.0px;top:61.5px;" width="24" height="24" viewBox="0 0 24 24"><path d="M4,6.5 L4,18 Q12,23 20,18 L20,6.5" fill="none" stroke="#333" stroke-width="1.5"/><path d="M4,12 L4,18 Q12,23 20,18 L20,12 L18,12 L18,16 Q12,18.5 8,16 L8,12 Z" fill="#8c8c8c" stroke="#333" stroke-width="1.3"/><ellipse cx="14" cy="6.5" rx="8" ry="4" fill="#fff" stroke="#333" stroke-width="1.5"/><path d="M6,1.5 L7.8,6.5 L13,6.5 L9,9.5 L10.5,15 L6,11.5 L1.5,15 L3,9.5 L-1,6.5 L4.2,6.5 Z" fill="#333"/></svg><svg style="position:absolute;left:825.0px;top:61.5px;" width="24" height="24" viewBox="0 0 24 24"><path d="M4,6.5 L4,18 Q12,23 20,18 L20,6.5" fill="none" stroke="#333" stroke-width="1.5"/><ellipse cx="12" cy="6.5" rx="8" ry="4" fill="#fff" stroke="#333" stroke-width="1.5"/><path d="M13,12 L21,18 L17,18.5 L19.5,23 L18,23.5 L15.5,19.5 L13,21.5 Z" fill="#333"/></svg><svg style="position:absolute;left:867.5px;top:61.5px;" width="24" height="24" viewBox="0 0 24 24"><path d="M1,14 L3,11 L23,11 L23,21 L3,21 L1,19 Z" fill="#fff" stroke="#333" stroke-width="1.3"/><ellipse cx="7" cy="10" rx="3.5" ry="2.2" fill="#fff" stroke="#333" stroke-width="1.2"/><path d="M3.5,10 L3.5,13 Q7,15 10.5,13 L10.5,10" fill="#fff" stroke="#333" stroke-width="1.2"/><ellipse cx="19" cy="3.5" rx="3" ry="2.2" fill="#fff" stroke="#333" stroke-width="1.2"/><path d="M16,3.5 L16,7 Q19,9 22,7 L22,3.5 M19,8 L19,12" fill="none" stroke="#333" stroke-width="1.2"/></svg><svg style="position:absolute;left:910.0px;top:61.5px;" width="24" height="24" viewBox="0 0 24 24"><path d="M5,2 L10,2 L13,5 L13,15 L3,15 L1,13 L1,10 L9,10 L9,6 L5,6 Z" fill="#fff" stroke="#333" stroke-width="1.2"/><path d="M13,11 L18,11 L22,14 L22,23 L13,23 L10,20 L10,18 L18,18 L18,14 L13,14" fill="#fff" stroke="#333" stroke-width="1.2"/><path d="M2,16 L2,20 L8,20" fill="none" stroke="#333" stroke-width="1.2"/><path d="M7,18 L10,20 L7,22 Z" fill="#333"/></svg><svg style="position:absolute;left:952.5px;top:61.5px;" width="24" height="24" viewBox="0 0 24 24"><g stroke="#333" stroke-width="1.2"><rect x="1.5" y="1.5" width="10" height="10" fill="#fff"/><rect x="12.5" y="1.5" width="10" height="10" fill="#888"/><rect x="1.5" y="12.5" width="10" height="10" fill="#888"/><rect x="12.5" y="12.5" width="10" height="10" fill="#888"/></g></svg><svg style="position:absolute;left:995.5px;top:61.5px;" width="24" height="24" viewBox="0 0 24 24"><g stroke="#333" stroke-width="1.1"><circle cx="9" cy="4" r="3" fill="#fff"/><circle cx="12" cy="5" r="3" fill="#fff"/><circle cx="4" cy="13" r="3.3" fill="#888"/><circle cx="7" cy="14" r="3.3" fill="#888"/><circle cx="17" cy="11" r="3.3" fill="#888"/><circle cx="20" cy="12" r="3.3" fill="#888"/><circle cx="11" cy="19" r="3.3" fill="#888"/><circle cx="14" cy="20" r="3.3" fill="#888"/></g></svg><div style="position:absolute;left:1030px;top:57px;width:2.5px;height:33px;background:#d3d3d3"></div><svg style="position:absolute;left:1042.0px;top:61.5px;" width="24" height="24" viewBox="0 0 24 24"><circle cx="7" cy="7" r="5" fill="none" stroke="#333" stroke-width="3.75" stroke-dasharray="1.96"/><circle cx="7" cy="7" r="3.75" fill="none" stroke="#333" stroke-width="2.5"/><circle cx="15.5" cy="15.5" r="7" fill="none" stroke="#333" stroke-width="5.25" stroke-dasharray="2.44"/><circle cx="15.5" cy="15.5" r="5.25" fill="none" stroke="#333" stroke-width="3.5"/></svg><svg style="position:absolute;left:1085.0px;top:61.5px;" width="24" height="24" viewBox="0 0 24 24"><circle cx="12" cy="10" r="9" fill="none" stroke="#333" stroke-width="6.75" stroke-dasharray="2.83"/><circle cx="12" cy="10" r="6.75" fill="none" stroke="#333" stroke-width="4.5"/><path d="M2,22 L5,19 L7,21 L9,19 L12,21 L15,19 L17,21 L19,19 L22,22 Z" fill="#333"/><rect x="1" y="21" width="22" height="2.5" fill="#333"/></svg><svg style="position:absolute;left:1127.0px;top:61.5px;" width="24" height="24" viewBox="0 0 24 24"><g stroke="#333" stroke-width="1.8"><path d="M4,2 L2,16 M8,2 L6,16 M12,2 L10,16 M16,2 L14,16 M20,2 L18,16"/></g><rect x="1" y="5" width="21" height="8" fill="none" stroke="#333" stroke-width="1.3"/><path d="M4,20 L19,20" stroke="#333" stroke-width="2"/><path d="M22,20 L18,17 L18,23 Z" fill="#333"/></svg><svg style="position:absolute;left:1170.0px;top:61.5px;" width="24" height="24" viewBox="0 0 24 24"><rect x="8" y="2" width="14" height="8" rx="4" fill="#fff" stroke="#666" stroke-width="1.2"/><rect x="2" y="14" width="14" height="8" rx="4" fill="#fff" stroke="#666" stroke-width="1.2"/><path d="M2,6 L9,6 M15,18 L22,18" stroke="#333" stroke-width="2"/><path d="M1,6 L5,3 L5,9 Z M23,18 L19,15 L19,21 Z" fill="#333"/></svg><div style="position:absolute;left:1205px;top:57px;width:2.5px;height:33px;background:#d3d3d3"></div><svg style="position:absolute;left:1218.0px;top:61.5px;" width="24" height="24" viewBox="0 0 24 24"><path d="M2,2 L18,2 L18,10 M2,2 L2,22 L10,22" fill="none" stroke="#333" stroke-width="1.4"/><g fill="#333"><rect x="5" y="5" width="2" height="1.5"/><rect x="8" y="5" width="8" height="1.5"/><rect x="5" y="9" width="2" height="1.5"/><rect x="8" y="9" width="8" height="1.5"/><rect x="5" y="13" width="2" height="1.5"/><rect x="8" y="13" width="8" height="1.5"/></g><path d="M10,19 Q15,13 22,17 Q17,23 10,19 Z" fill="#fff" stroke="#333" stroke-width="1.3"/><path d="M11,22 L21,14" stroke="#333" stroke-width="1.3"/></svg><svg style="position:absolute;left:1260.0px;top:61.5px;" width="24" height="24" viewBox="0 0 24 24"><path d="M14,4 L19,2 L23,4 L23,21 L19,23 L14,21 Z" fill="#fff" stroke="#555" stroke-width="1.2"/><path d="M19,2 L19,23" stroke="#555"/><path d="M3,13 L8,11 L12,13 L12,21 L8,23 L3,21 Z" fill="#fff" stroke="#555" stroke-width="1.2"/><path d="M6,1 L6,10 M1.5,5.5 L10.5,5.5" stroke="#2255b8" stroke-width="2.5"/></svg><div style="position:absolute;left:1295px;top:57px;width:2.5px;height:33px;background:#d3d3d3"></div><svg style="position:absolute;left:1308.0px;top:61.5px;" width="24" height="24" viewBox="0 0 24 24"><ellipse cx="16" cy="11" rx="5" ry="9" fill="none" stroke="#333" stroke-width="2"/><path d="M16,12 L4,21" stroke="#1f55b5" stroke-width="2.5"/><path d="M2,23 L3,16 L8,21 Z" fill="#1f55b5"/></svg><svg style="position:absolute;left:1350.0px;top:61.5px;" width="24" height="24" viewBox="0 0 24 24"><ellipse cx="12" cy="12" rx="10" ry="5.5" fill="none" stroke="#333" stroke-width="2"/><path d="M5,4 Q12,1 21,4 M3,20 Q12,23 19,20" fill="none" stroke="#1f55b5" stroke-width="1.6"/><path d="M3,4 L7,1.5 L7,6.5 Z M21,20 L17,17.5 L17,22.5 Z" fill="#1f55b5"/></svg><svg style="position:absolute;left:1392.0px;top:61.5px;" width="24" height="24" viewBox="0 0 24 24"><ellipse cx="12" cy="8" rx="10" ry="5" fill="none" stroke="#333" stroke-width="2"/><g stroke="#1f55b5" stroke-width="1.4"><path d="M2,14 L2,20 M8,16 L8,22 M16,16 L16,22 M22,14 L22,20"/></g><path d="M0,19 L4,19 L2,23 Z M6,21 L10,21 L8,24 Z M14,21 L18,21 L16,24 Z M20,19 L24,19 L22,23 Z" fill="#1f55b5"/></svg><svg style="position:absolute;left:1435.5px;top:61.5px;" width="24" height="24" viewBox="0 0 24 24"><ellipse cx="12" cy="12" rx="9" ry="5.5" fill="none" stroke="#333" stroke-width="2"/><g stroke="#1f55b5" stroke-width="1.6"><path d="M1,1 L5,5 M23,1 L19,5 M1,23 L5,19 M23,23 L19,19"/></g><path d="M6,6 L6,2 L2,6 Z M18,6 L22,6 L18,2 Z M6,18 L2,18 L6,22 Z M18,18 L18,22 L22,18 Z" fill="#1f55b5"/></svg><svg style="position:absolute;left:1477.5px;top:61.5px;" width="24" height="24" viewBox="0 0 24 24"><ellipse cx="12" cy="11" rx="10" ry="5.5" fill="none" stroke="#333" stroke-width="2"/><path d="M12,9 L12,19" stroke="#1f55b5" stroke-width="2"/><path d="M8,18 L16,18 L12,24 Z" fill="#1f55b5"/><g fill="#1f55b5"><rect x="1" y="1" width="2" height="3"/><rect x="6" y="0" width="2" height="3"/><rect x="11" y="0" width="2" height="3"/><rect x="16" y="0" width="2" height="3"/><rect x="21" y="1" width="2" height="3"/></g></svg><div style="position:absolute;left:1525px;top:53px;width:221px;height:41px;background:#eeeeee;border-radius:5px"></div><div class="t" style="left:1537.5px;top:65.7px;font-size:18px;line-height:18px;color:#333;font-weight:normal;font-style:normal;letter-spacing:-0.5039583333333335px;">Search tools...</div><div style="position:absolute;left:1650px;top:64.5px;width:27px;height:21.5px;background:#e6e6e6;border:1px solid #b5b5b5;border-radius:2px;box-sizing:border-box"></div><div style="position:absolute;left:1679px;top:64.5px;width:32px;height:21.5px;background:#e6e6e6;border:1px solid #b5b5b5;border-radius:2px;box-sizing:border-box"></div><div style="position:absolute;left:1712px;top:64.5px;width:20px;height:21.5px;background:#e6e6e6;border:1px solid #b5b5b5;border-radius:2px;box-sizing:border-box"></div><div class="t" style="left:1654px;top:68.3px;font-size:15px;line-height:15px;color:#444;font-weight:normal;font-style:normal;letter-spacing:0.0010742187500003553px;">ctrl</div><div class="t" style="left:1683px;top:68.3px;font-size:15px;line-height:15px;color:#444;font-weight:normal;font-style:normal;letter-spacing:-0.501953125px;">shift</div><div class="t" style="left:1718px;top:68.3px;font-size:15px;line-height:15px;color:#444;font-weight:normal;font-style:normal;letter-spacing:0.6574218750000007px;">p</div><svg style="position:absolute;left:14px;top:104px;" width="24" height="26" viewBox="0 0 24 26"><g fill="#333"><rect x="6" y="0" width="2.6" height="3"/><rect x="6" y="5" width="2.6" height="3"/><circle cx="7.3" cy="12.5" r="4"/><rect x="6" y="18" width="2.6" height="3"/><rect x="6" y="22.5" width="2.6" height="3"/></g><path d="M17.5,13 L17.5,24 M12,18.5 L23,18.5" stroke="#2255b8" stroke-width="2.8"/></svg><svg style="position:absolute;left:12px;top:150px;" width="26" height="22" viewBox="0 0 26 22"><path d="M13,1 Q25,1 25,8 Q25,15 13,15 Q10,15 8,14.5 L3,20 L5,13.5 Q1,11.5 1,8 Q1,1 13,1 Z" fill="#333"/></svg><svg style="position:absolute;left:12px;top:192px;" width="26" height="26" viewBox="0 0 26 26"><circle cx="14" cy="15" r="9" fill="none" stroke="#333" stroke-width="2.4"/><path d="M11,3 L17,3 M14,3 L14,6 M21,6 L23,8" stroke="#333" stroke-width="2.4"/><path d="M14,15 L18,10" stroke="#333" stroke-width="2"/><path d="M1,12 L6,12 M0,16 L5,16 M1,20 L6,20" stroke="#333" stroke-width="1.6"/></svg><div style="position:absolute;left:0px;top:227px;width:49px;height:1px;background:#d5d5d5"></div><svg style="position:absolute;left:14px;top:238px;" width="22" height="23" viewBox="0 0 22 23"><rect x="1.2" y="1.2" width="19.5" height="20.5" rx="2" fill="none" stroke="#333" stroke-width="2"/><g stroke="#333" stroke-width="1.5" fill="none"><path d="M4,6 L5.5,7.5 L8,4.5 M4,11 L5.5,12.5 L8,9.5 M4,16 L5.5,17.5 L8,14.5"/></g><g fill="#333"><rect x="10" y="5" width="8" height="2.2"/><rect x="10" y="10" width="8" height="2.2"/><rect x="10" y="15" width="8" height="2.2"/></g></svg><div style="position:absolute;left:50px;top:96px;width:257px;height:1160px;background:#fff"></div><div style="position:absolute;left:50px;top:96px;width:257px;height:1px;background:#cfcfcf"></div><div style="position:absolute;left:306px;top:96px;width:1px;height:1160px;background:#cfcfcf"></div><svg style="position:absolute;left:63px;top:116px;" width="20" height="20" viewBox="0 0 20 20"><path d="M1,1.5 L19,1.5 L11.5,10 L11.5,18.5 L8.5,16.5 L8.5,10 Z" fill="#fff" stroke="#333" stroke-width="1.6" stroke-linejoin="round"/></svg><div style="position:absolute;left:99.5px;top:106.3px;width:151px;height:36.4px;border:1px solid #aaa;border-radius:4px;box-sizing:border-box;background:#fff"></div><div class="t" style="left:107px;top:116.2px;font-size:17.5px;line-height:17.5px;color:#9a9a9a;font-weight:normal;font-style:italic;letter-spacing:-0.6338169642857139px;">Filter by name</div><svg style="position:absolute;left:268px;top:115px;" width="19" height="19" viewBox="0 0 19 19"><g fill="#222"><rect x="0" y="1" width="2.2" height="2.2"/><rect x="4" y="1" width="15" height="2.2"/><rect x="0" y="6" width="2.2" height="2.2"/><rect x="4" y="6" width="15" height="2.2"/><rect x="0" y="11" width="2.2" height="2.2"/><rect x="4" y="11" width="15" height="2.2"/><rect x="0" y="16" width="2.2" height="2.2"/><rect x="4" y="16" width="15" height="2.2"/></g></svg><div class="t" style="left:55.7px;top:154.2px;font-size:16.3px;line-height:16.3px;color:#222;font-weight:bold;font-style:normal;letter-spacing:-0.33685044642857165px;">Instances (18)</div><svg style="position:absolute;left:270px;top:154px;" width="24" height="19" viewBox="0 0 24 19"><path d="M1,2 L8,2 L10,4 L22.5,4 L22.5,17.5 L1,17.5 Z" fill="none" stroke="#999" stroke-width="1.2"/><path d="M6,8 L6,16 M2,12 L10,12" stroke="#6a9bd8" stroke-width="2.2"/></svg><div style="position:absolute;left:50px;top:280px;width:250px;height:30px;background:#b4dcf5"></div><svg style="position:absolute;left:57px;top:187px;" width="19.5" height="19.5" viewBox="0 0 23 23"><path d="M0.8,0.8 L17.4,0.8 L22.3,5.3 L22.3,22.4 L5.3,22.4 L0.8,17.6 Z" fill="#fff" stroke="#444" stroke-width="1.4" stroke-linejoin="miter"/><path d="M1,1 L11.3,1 L15.5,5.3 L5.3,5.3 Z" fill="#8f8f8f"/><path d="M1,1 L5.3,5.3 L5.3,15.4 L1,11.5 Z" fill="#999"/><rect x="5.3" y="5.3" width="10.2" height="10.1" fill="#9d9d9d" stroke="#444" stroke-width="1"/><path d="M0.8,0.8 L5.3,5.3 M11.3,0.8 L15.5,5.3 M15.5,5.3 L22.3,5.3 M5.3,15.4 L5.3,22.4 M0.8,11.3 L5.3,15.4" fill="none" stroke="#444" stroke-width="1"/></svg><div class="t" style="left:83.6px;top:189.2px;font-size:16.5px;line-height:16.5px;color:#333;font-weight:normal;font-style:normal;letter-spacing:-0.4671093749999997px;">Exer...</div><svg style="position:absolute;left:144px;top:184px;" width="12" height="22" viewBox="0 0 12 22"><path d="M6,0 L6,9" stroke="#333" stroke-width="2"/><path d="M1.5,6 L10.5,6 L6,12 Z" fill="#333"/><circle cx="6" cy="16.5" r="4.5" fill="none" stroke="#333" stroke-width="1.6"/><circle cx="6" cy="16.5" r="1.8" fill="#333"/></svg><svg style="position:absolute;left:86px;top:223px;" width="11" height="11" viewBox="0 0 11 11"><circle cx="5.5" cy="5.5" r="4.3" fill="none" stroke="#bbb" stroke-width="1.2"/><circle cx="5.5" cy="5.5" r="1.6" fill="#bbb"/></svg><div class="t" style="left:108px;top:221.7px;font-size:16.5px;line-height:16.5px;color:#a8a8a8;font-weight:normal;font-style:normal;letter-spacing:-0.20250651041666737px;">Origin</div><svg style="position:absolute;left:57px;top:256.2px;" width="11" height="12" viewBox="0 0 11 12"><path d="M2,1 L8.5,6 L2,11" fill="none" stroke="#555" stroke-width="2.4"/></svg><svg style="position:absolute;left:81px;top:252px;" width="21" height="19" viewBox="0 0 21 19"><path d="M1,10 L7,7 L7,4 L11,1 L19.5,1 L19.5,11 L14,18 L3,18 L1,15 Z" fill="#fff" stroke="#555" stroke-width="1.1"/><path d="M1,10 L13,10 L13,18 M13,10 L19.5,3 M7,7 L13,7 L19.5,1 M13,7 L13,10" fill="none" stroke="#555" stroke-width="1"/></svg><div class="t" style="left:108px;top:254.2px;font-size:16.5px;line-height:16.5px;color:#333;font-weight:normal;font-style:normal;letter-spacing:-0.2417987351190476px;">Origin Cube &lt;1&gt;</div><svg style="position:absolute;left:57px;top:288.7px;" width="11" height="12" viewBox="0 0 11 12"><path d="M2,1 L8.5,6 L2,11" fill="none" stroke="#555" stroke-width="2.4"/></svg><svg style="position:absolute;left:80px;top:283px;" width="22" height="22" viewBox="0 0 22 22"><g fill="#2a62c8"><rect x="0" y="0" width="9" height="9"/></g><g stroke="#fff" stroke-width="0.8"><path d="M3,0 L3,9 M6,0 L6,9 M0,3 L9,3 M0,6 L9,6"/></g><rect x="1" y="1" width="20" height="20" fill="none" stroke="#333" stroke-width="1.2" stroke-dasharray="2,2"/><rect x="5" y="7" width="9" height="8" fill="#fff" stroke="#333" stroke-width="1.3"/><path d="M14,11 L17,11 L17,18 L9,18 L9,15" fill="none" stroke="#333" stroke-width="1.3"/></svg><div class="t" style="left:108px;top:286.7px;font-size:16.5px;line-height:16.5px;color:#333;font-weight:normal;font-style:normal;letter-spacing:-1.0376785714285717px;">REV ...</div><svg style="position:absolute;left:170px;top:283px;" width="20" height="23" viewBox="0 0 20 23"><g fill="#333"><rect x="4.5" y="0" width="2" height="3"/><rect x="4.5" y="4.5" width="2" height="3"/><circle cx="5.5" cy="11.5" r="3.5"/><rect x="4.5" y="16" width="2" height="3"/><rect x="4.5" y="20" width="2" height="3"/></g><circle cx="13.5" cy="16" r="6" fill="#6a9bd8" stroke="#b4dcf5" stroke-width="1"/><path d="M13.5,12 L13.5,18 M10.5,15.5 L13.5,19 L16.5,15.5" fill="none" stroke="#fff" stroke-width="1.8"/></svg><svg style="position:absolute;left:57px;top:321.2px;" width="11" height="12" viewBox="0 0 11 12"><path d="M2,1 L8.5,6 L2,11" fill="none" stroke="#555" stroke-width="2.4"/></svg><svg style="position:absolute;left:82px;top:319.2px;" width="20" height="16" viewBox="0 0 20 16"><path d="M1,1.5 L7,1.5 L9,4 L19,4 L19,15 L1,15 Z" fill="none" stroke="#555" stroke-width="1.1"/></svg><div class="t" style="left:108px;top:319.2px;font-size:16.5px;line-height:16.5px;color:#333;font-weight:normal;font-style:normal;letter-spacing:-0.26032087053571473px;">Inner Tube (7)</div><svg style="position:absolute;left:57px;top:353.7px;" width="11" height="12" viewBox="0 0 11 12"><path d="M2,1 L8.5,6 L2,11" fill="none" stroke="#555" stroke-width="2.4"/></svg><svg style="position:absolute;left:82px;top:351.7px;" width="20" height="16" viewBox="0 0 20 16"><path d="M1,1.5 L7,1.5 L9,4 L19,4 L19,15 L1,15 Z" fill="none" stroke="#555" stroke-width="1.1"/></svg><div class="t" style="left:108px;top:351.7px;font-size:16.5px;line-height:16.5px;color:#333;font-weight:normal;font-style:normal;letter-spacing:-0.49434659090909155px;">Gearbox (7)</div><svg style="position:absolute;left:57px;top:386.2px;" width="11" height="12" viewBox="0 0 11 12"><path d="M2,1 L8.5,6 L2,11" fill="none" stroke="#555" stroke-width="2.4"/></svg><svg style="position:absolute;left:82px;top:384.2px;" width="20" height="16" viewBox="0 0 20 16"><path d="M1,1.5 L7,1.5 L9,4 L19,4 L19,15 L1,15 Z" fill="none" stroke="#555" stroke-width="1.1"/></svg><div class="t" style="left:108px;top:384.2px;font-size:16.5px;line-height:16.5px;color:#333;font-weight:normal;font-style:normal;letter-spacing:-0.38034555288461563px;">Base Tube (2)</div><svg style="position:absolute;left:55.6px;top:420.7px;" width="14" height="9" viewBox="0 0 14 9"><path d="M1,1.5 L7,7 L13,1.5" fill="none" stroke="#555" stroke-width="2.4"/></svg><div class="t" style="left:79.3px;top:416.7px;font-size:16.5px;line-height:16.5px;color:#333;font-weight:normal;font-style:normal;letter-spacing:-0.08791232638888857px;">Items (0)</div><svg style="position:absolute;left:55.6px;top:453.2px;" width="14" height="9" viewBox="0 0 14 9"><path d="M1,1.5 L7,7 L13,1.5" fill="none" stroke="#555" stroke-width="2.4"/></svg><div class="t" style="left:79.3px;top:449.2px;font-size:16.5px;line-height:16.5px;color:#333;font-weight:normal;font-style:normal;letter-spacing:-0.33429253472222187px;">Loads (0)</div><svg style="position:absolute;left:55.6px;top:485.7px;" width="14" height="9" viewBox="0 0 14 9"><path d="M1,1.5 L7,7 L13,1.5" fill="none" stroke="#555" stroke-width="2.4"/></svg><div class="t" style="left:79.3px;top:481.7px;font-size:16.5px;line-height:16.5px;color:#333;font-weight:normal;font-style:normal;letter-spacing:-0.267254774305556px;">Mate Features (17)</div><div style="position:absolute;left:61.5px;top:506px;width:1.3px;height:551px;background:#cfcfcf"></div><div style="position:absolute;left:55.6px;top:1057px;width:12px;height:1.3px;background:#cfcfcf"></div><svg style="position:absolute;left:105.5px;top:512.2px;" width="20" height="20" viewBox="0 0 20 20"><rect x="1" y="1" width="18" height="18" fill="none" stroke="#c4c4c4" stroke-width="1.2" stroke-dasharray="2,2"/><rect x="4.5" y="5" width="8" height="7" fill="#fff" stroke="#c4c4c4" stroke-width="1.3"/><path d="M12.5,9 L15,9 L15,15.5 L8,15.5 L8,12" fill="none" stroke="#c4c4c4" stroke-width="1.3"/></svg><div class="t" style="left:131.3px;top:514.2px;font-size:16.5px;line-height:16.5px;color:#a3a3a3;font-weight:normal;font-style:normal;letter-spacing:-0.4457756696428571px;">Group 1</div><svg style="position:absolute;left:81px;top:548.7px;" width="11" height="12" viewBox="0 0 11 12"><path d="M2,1 L8.5,6 L2,11" fill="none" stroke="#555" stroke-width="2.4"/></svg><svg style="position:absolute;left:108px;top:545.7px;" width="15" height="18" viewBox="0 0 15 18"><path d="M1,4.5 L1,14 Q7.5,18.5 14,14 L14,4.5" fill="#fff" stroke="#c4c4c4" stroke-width="1.2"/><path d="M1,9.5 L1,14 Q7.5,18.5 14,14 L14,9.5 L11,9.5 L11,12.5 Q7.5,14.5 4,12.5 L4,9.5 Z" fill="#c9c9c9" stroke="#c4c4c4" stroke-width="1"/><ellipse cx="7.5" cy="4.5" rx="6.5" ry="3.3" fill="#fff" stroke="#c4c4c4" stroke-width="1.2"/></svg><div class="t" style="left:131.3px;top:546.7px;font-size:16.5px;line-height:16.5px;color:#a3a3a3;font-weight:normal;font-style:normal;letter-spacing:-0.20580078124999943px;">Fastened 1</div><svg style="position:absolute;left:81px;top:581.2px;" width="11" height="12" viewBox="0 0 11 12"><path d="M2,1 L8.5,6 L2,11" fill="none" stroke="#555" stroke-width="2.4"/></svg><svg style="position:absolute;left:104px;top:576.2px;" width="22" height="20" viewBox="0 0 22 20"><path d="M6,7 L6,16 Q11,19.5 16,16 L16,7" fill="#fff" stroke="#c4c4c4" stroke-width="1.2"/><ellipse cx="11" cy="7" rx="5" ry="2.5" fill="#fff" stroke="#c4c4c4" stroke-width="1.2"/><path d="M11,7 L11,2 M9,3.5 L11,0.5 L13,3.5 Z" fill="#aaa" stroke="#aaa" stroke-width="1"/><rect x="0.5" y="7" width="1.8" height="9" fill="#bbb"/><rect x="19.7" y="7" width="1.8" height="9" fill="#bbb"/></svg><svg style="position:absolute;left:217px;top:577.2px;" width="16" height="20" viewBox="0 0 16 20"><path d="M1,8.5 L15,8.5 M1,11.5 L15,11.5 M8,0 L8,7 M8,13 L8,20" stroke="#888" stroke-width="1.4"/><path d="M5,4 L8,8 L11,4 Z M5,16 L8,12 L11,16 Z" fill="#888"/></svg><div class="t" style="left:131.3px;top:579.2px;font-size:16.5px;line-height:16.5px;color:#a3a3a3;font-weight:normal;font-style:normal;letter-spacing:-0.16848632812499975px;">Slider 1</div><svg style="position:absolute;left:81px;top:613.7px;" width="11" height="12" viewBox="0 0 11 12"><path d="M2,1 L8.5,6 L2,11" fill="none" stroke="#555" stroke-width="2.4"/></svg><svg style="position:absolute;left:104px;top:608.7px;" width="22" height="20" viewBox="0 0 22 20"><path d="M6,7 L6,16 Q11,19.5 16,16 L16,7" fill="#fff" stroke="#c4c4c4" stroke-width="1.2"/><ellipse cx="11" cy="7" rx="5" ry="2.5" fill="#fff" stroke="#c4c4c4" stroke-width="1.2"/><path d="M11,7 L11,2 M9,3.5 L11,0.5 L13,3.5 Z" fill="#aaa" stroke="#aaa" stroke-width="1"/><rect x="0.5" y="7" width="1.8" height="9" fill="#bbb"/><rect x="19.7" y="7" width="1.8" height="9" fill="#bbb"/></svg><svg style="position:absolute;left:217px;top:609.7px;" width="16" height="20" viewBox="0 0 16 20"><path d="M1,8.5 L15,8.5 M1,11.5 L15,11.5 M8,0 L8,7 M8,13 L8,20" stroke="#888" stroke-width="1.4"/><path d="M5,4 L8,8 L11,4 Z M5,16 L8,12 L11,16 Z" fill="#888"/></svg><div class="t" style="left:131.3px;top:611.7px;font-size:16.5px;line-height:16.5px;color:#a3a3a3;font-weight:normal;font-style:normal;letter-spacing:-0.04348632812499975px;">Slider 2</div><svg style="position:absolute;left:81px;top:646.2px;" width="11" height="12" viewBox="0 0 11 12"><path d="M2,1 L8.5,6 L2,11" fill="none" stroke="#555" stroke-width="2.4"/></svg><svg style="position:absolute;left:108px;top:643.2px;" width="15" height="18" viewBox="0 0 15 18"><path d="M1,4.5 L1,14 Q7.5,18.5 14,14 L14,4.5" fill="#fff" stroke="#c4c4c4" stroke-width="1.2"/><path d="M1,9.5 L1,14 Q7.5,18.5 14,14 L14,9.5 L11,9.5 L11,12.5 Q7.5,14.5 4,12.5 L4,9.5 Z" fill="#c9c9c9" stroke="#c4c4c4" stroke-width="1"/><ellipse cx="7.5" cy="4.5" rx="6.5" ry="3.3" fill="#fff" stroke="#c4c4c4" stroke-width="1.2"/></svg><div class="t" style="left:131.3px;top:644.2px;font-size:16.5px;line-height:16.5px;color:#a3a3a3;font-weight:normal;font-style:normal;letter-spacing:-0.1758007812499997px;">Fastened 2</div><svg style="position:absolute;left:81px;top:678.7px;" width="11" height="12" viewBox="0 0 11 12"><path d="M2,1 L8.5,6 L2,11" fill="none" stroke="#555" stroke-width="2.4"/></svg><svg style="position:absolute;left:108.5px;top:674.7px;" width="15" height="21" viewBox="0 0 15 21"><path d="M7.5,20 Q1,11 1,7.5 A6.5,6.5 0 0 1 14,7.5 Q14,11 7.5,20 Z" fill="#fff" stroke="#c4c4c4" stroke-width="1.2"/><circle cx="7.5" cy="7.5" r="3.2" fill="none" stroke="#c4c4c4" stroke-width="1.1"/><circle cx="7.5" cy="7.5" r="1.2" fill="#c4c4c4"/></svg><div class="t" style="left:131.3px;top:676.7px;font-size:16.5px;line-height:16.5px;color:#a3a3a3;font-weight:normal;font-style:normal;letter-spacing:-0.1758007812499997px;">Fastened 3</div><svg style="position:absolute;left:81px;top:711.2px;" width="11" height="12" viewBox="0 0 11 12"><path d="M2,1 L8.5,6 L2,11" fill="none" stroke="#555" stroke-width="2.4"/></svg><svg style="position:absolute;left:108px;top:708.2px;" width="15" height="18" viewBox="0 0 15 18"><path d="M1,4.5 L1,14 Q7.5,18.5 14,14 L14,4.5" fill="#fff" stroke="#c4c4c4" stroke-width="1.2"/><path d="M1,9.5 L1,14 Q7.5,18.5 14,14 L14,9.5 L11,9.5 L11,12.5 Q7.5,14.5 4,12.5 L4,9.5 Z" fill="#c9c9c9" stroke="#c4c4c4" stroke-width="1"/><ellipse cx="7.5" cy="4.5" rx="6.5" ry="3.3" fill="#fff" stroke="#c4c4c4" stroke-width="1.2"/></svg><div class="t" style="left:131.3px;top:709.2px;font-size:16.5px;line-height:16.5px;color:#a3a3a3;font-weight:normal;font-style:normal;letter-spacing:-0.1758007812499997px;">Fastened 4</div><svg style="position:absolute;left:81px;top:743.7px;" width="11" height="12" viewBox="0 0 11 12"><path d="M2,1 L8.5,6 L2,11" fill="none" stroke="#555" stroke-width="2.4"/></svg><svg style="position:absolute;left:108px;top:740.7px;" width="15" height="18" viewBox="0 0 15 18"><path d="M1,4.5 L1,14 Q7.5,18.5 14,14 L14,4.5" fill="#fff" stroke="#c4c4c4" stroke-width="1.2"/><path d="M1,9.5 L1,14 Q7.5,18.5 14,14 L14,9.5 L11,9.5 L11,12.5 Q7.5,14.5 4,12.5 L4,9.5 Z" fill="#c9c9c9" stroke="#c4c4c4" stroke-width="1"/><ellipse cx="7.5" cy="4.5" rx="6.5" ry="3.3" fill="#fff" stroke="#c4c4c4" stroke-width="1.2"/></svg><div class="t" style="left:131.3px;top:741.7px;font-size:16.5px;line-height:16.5px;color:#a3a3a3;font-weight:normal;font-style:normal;letter-spacing:-0.1758007812499997px;">Fastened 5</div><svg style="position:absolute;left:81px;top:776.2px;" width="11" height="12" viewBox="0 0 11 12"><path d="M2,1 L8.5,6 L2,11" fill="none" stroke="#555" stroke-width="2.4"/></svg><svg style="position:absolute;left:108px;top:773.2px;" width="15" height="18" viewBox="0 0 15 18"><path d="M1,4.5 L1,14 Q7.5,18.5 14,14 L14,4.5" fill="#fff" stroke="#c4c4c4" stroke-width="1.2"/><path d="M1,9.5 L1,14 Q7.5,18.5 14,14 L14,9.5 L11,9.5 L11,12.5 Q7.5,14.5 4,12.5 L4,9.5 Z" fill="#c9c9c9" stroke="#c4c4c4" stroke-width="1"/><ellipse cx="7.5" cy="4.5" rx="6.5" ry="3.3" fill="#fff" stroke="#c4c4c4" stroke-width="1.2"/></svg><div class="t" style="left:131.3px;top:774.2px;font-size:16.5px;line-height:16.5px;color:#a3a3a3;font-weight:normal;font-style:normal;letter-spacing:-0.27580078124999974px;">Fastened 7</div><svg style="position:absolute;left:81px;top:808.7px;" width="11" height="12" viewBox="0 0 11 12"><path d="M2,1 L8.5,6 L2,11" fill="none" stroke="#555" stroke-width="2.4"/></svg><svg style="position:absolute;left:108px;top:805.7px;" width="15" height="18" viewBox="0 0 15 18"><path d="M1,4.5 L1,14 Q7.5,18.5 14,14 L14,4.5" fill="#fff" stroke="#c4c4c4" stroke-width="1.2"/><path d="M1,9.5 L1,14 Q7.5,18.5 14,14 L14,9.5 L11,9.5 L11,12.5 Q7.5,14.5 4,12.5 L4,9.5 Z" fill="#c9c9c9" stroke="#c4c4c4" stroke-width="1"/><ellipse cx="7.5" cy="4.5" rx="6.5" ry="3.3" fill="#fff" stroke="#c4c4c4" stroke-width="1.2"/></svg><div class="t" style="left:132.7px;top:806.7px;font-size:16.5px;line-height:16.5px;color:#a3a3a3;font-weight:normal;font-style:italic;letter-spacing:-0.23953125000000017px;">Fastened 19</div><svg style="position:absolute;left:81px;top:841.2px;" width="11" height="12" viewBox="0 0 11 12"><path d="M2,1 L8.5,6 L2,11" fill="none" stroke="#555" stroke-width="2.4"/></svg><svg style="position:absolute;left:108px;top:838.2px;" width="15" height="18" viewBox="0 0 15 18"><path d="M1,4.5 L1,14 Q7.5,18.5 14,14 L14,4.5" fill="#fff" stroke="#c4c4c4" stroke-width="1.2"/><path d="M1,9.5 L1,14 Q7.5,18.5 14,14 L14,9.5 L11,9.5 L11,12.5 Q7.5,14.5 4,12.5 L4,9.5 Z" fill="#c9c9c9" stroke="#c4c4c4" stroke-width="1"/><ellipse cx="7.5" cy="4.5" rx="6.5" ry="3.3" fill="#fff" stroke="#c4c4c4" stroke-width="1.2"/></svg><div class="t" style="left:131.3px;top:839.2px;font-size:16.5px;line-height:16.5px;color:#a3a3a3;font-weight:normal;font-style:normal;letter-spacing:-0.2213494318181817px;">Fastened 22</div><svg style="position:absolute;left:81px;top:873.7px;" width="11" height="12" viewBox="0 0 11 12"><path d="M2,1 L8.5,6 L2,11" fill="none" stroke="#555" stroke-width="2.4"/></svg><svg style="position:absolute;left:108px;top:870.7px;" width="15" height="18" viewBox="0 0 15 18"><path d="M1,4.5 L1,14 Q7.5,18.5 14,14 L14,4.5" fill="#fff" stroke="#c4c4c4" stroke-width="1.2"/><path d="M1,9.5 L1,14 Q7.5,18.5 14,14 L14,9.5 L11,9.5 L11,12.5 Q7.5,14.5 4,12.5 L4,9.5 Z" fill="#c9c9c9" stroke="#c4c4c4" stroke-width="1"/><ellipse cx="7.5" cy="4.5" rx="6.5" ry="3.3" fill="#fff" stroke="#c4c4c4" stroke-width="1.2"/></svg><div class="t" style="left:132.7px;top:871.7px;font-size:16.5px;line-height:16.5px;color:#a3a3a3;font-weight:normal;font-style:italic;letter-spacing:-0.23953125000000017px;">Fastened 18</div><svg style="position:absolute;left:81px;top:906.2px;" width="11" height="12" viewBox="0 0 11 12"><path d="M2,1 L8.5,6 L2,11" fill="none" stroke="#555" stroke-width="2.4"/></svg><svg style="position:absolute;left:108px;top:903.2px;" width="15" height="18" viewBox="0 0 15 18"><path d="M1,4.5 L1,14 Q7.5,18.5 14,14 L14,4.5" fill="#fff" stroke="#c4c4c4" stroke-width="1.2"/><path d="M1,9.5 L1,14 Q7.5,18.5 14,14 L14,9.5 L11,9.5 L11,12.5 Q7.5,14.5 4,12.5 L4,9.5 Z" fill="#c9c9c9" stroke="#c4c4c4" stroke-width="1"/><ellipse cx="7.5" cy="4.5" rx="6.5" ry="3.3" fill="#fff" stroke="#c4c4c4" stroke-width="1.2"/></svg><div class="t" style="left:131.3px;top:904.2px;font-size:16.5px;line-height:16.5px;color:#a3a3a3;font-weight:normal;font-style:normal;letter-spacing:-0.1668039772727264px;">Fastened 24</div><svg style="position:absolute;left:81px;top:938.7px;" width="11" height="12" viewBox="0 0 11 12"><path d="M2,1 L8.5,6 L2,11" fill="none" stroke="#555" stroke-width="2.4"/></svg><svg style="position:absolute;left:108px;top:935.7px;" width="15" height="18" viewBox="0 0 15 18"><path d="M1,4.5 L1,14 Q7.5,18.5 14,14 L14,4.5" fill="#fff" stroke="#c4c4c4" stroke-width="1.2"/><path d="M1,9.5 L1,14 Q7.5,18.5 14,14 L14,9.5 L11,9.5 L11,12.5 Q7.5,14.5 4,12.5 L4,9.5 Z" fill="#c9c9c9" stroke="#c4c4c4" stroke-width="1"/><ellipse cx="7.5" cy="4.5" rx="6.5" ry="3.3" fill="#fff" stroke="#c4c4c4" stroke-width="1.2"/></svg><div class="t" style="left:131.3px;top:936.7px;font-size:16.5px;line-height:16.5px;color:#a3a3a3;font-weight:normal;font-style:normal;letter-spacing:-0.1668039772727264px;">Fastened 25</div><svg style="position:absolute;left:81px;top:971.2px;" width="11" height="12" viewBox="0 0 11 12"><path d="M2,1 L8.5,6 L2,11" fill="none" stroke="#555" stroke-width="2.4"/></svg><svg style="position:absolute;left:108px;top:968.2px;" width="15" height="18" viewBox="0 0 15 18"><path d="M1,4.5 L1,14 Q7.5,18.5 14,14 L14,4.5" fill="#fff" stroke="#c4c4c4" stroke-width="1.2"/><path d="M1,9.5 L1,14 Q7.5,18.5 14,14 L14,9.5 L11,9.5 L11,12.5 Q7.5,14.5 4,12.5 L4,9.5 Z" fill="#c9c9c9" stroke="#c4c4c4" stroke-width="1"/><ellipse cx="7.5" cy="4.5" rx="6.5" ry="3.3" fill="#fff" stroke="#c4c4c4" stroke-width="1.2"/></svg><div class="t" style="left:131.3px;top:969.2px;font-size:16.5px;line-height:16.5px;color:#a3a3a3;font-weight:normal;font-style:normal;letter-spacing:-0.18580078124999916px;">Fastened 6</div><svg style="position:absolute;left:81px;top:1003.7px;" width="11" height="12" viewBox="0 0 11 12"><path d="M2,1 L8.5,6 L2,11" fill="none" stroke="#555" stroke-width="2.4"/></svg><svg style="position:absolute;left:108px;top:1000.7px;" width="15" height="18" viewBox="0 0 15 18"><path d="M1,4.5 L1,14 Q7.5,18.5 14,14 L14,4.5" fill="#fff" stroke="#c4c4c4" stroke-width="1.2"/><path d="M1,9.5 L1,14 Q7.5,18.5 14,14 L14,9.5 L11,9.5 L11,12.5 Q7.5,14.5 4,12.5 L4,9.5 Z" fill="#c9c9c9" stroke="#c4c4c4" stroke-width="1"/><ellipse cx="7.5" cy="4.5" rx="6.5" ry="3.3" fill="#fff" stroke="#c4c4c4" stroke-width="1.2"/></svg><div class="t" style="left:131.3px;top:1001.7px;font-size:16.5px;line-height:16.5px;color:#a3a3a3;font-weight:normal;font-style:normal;letter-spacing:-0.22820312499999965px;">Fastened 11</div><svg style="position:absolute;left:81px;top:1036.2px;" width="11" height="12" viewBox="0 0 11 12"><path d="M2,1 L8.5,6 L2,11" fill="none" stroke="#555" stroke-width="2.4"/></svg><svg style="position:absolute;left:108px;top:1033.2px;" width="15" height="18" viewBox="0 0 15 18"><path d="M1,4.5 L1,14 Q7.5,18.5 14,14 L14,4.5" fill="#fff" stroke="#c4c4c4" stroke-width="1.2"/><path d="M1,9.5 L1,14 Q7.5,18.5 14,14 L14,9.5 L11,9.5 L11,12.5 Q7.5,14.5 4,12.5 L4,9.5 Z" fill="#c9c9c9" stroke="#c4c4c4" stroke-width="1"/><ellipse cx="7.5" cy="4.5" rx="6.5" ry="3.3" fill="#fff" stroke="#c4c4c4" stroke-width="1.2"/></svg><div class="t" style="left:131.3px;top:1034.2px;font-size:16.5px;line-height:16.5px;color:#a3a3a3;font-weight:normal;font-style:normal;letter-spacing:-0.2940767045454542px;">Fastened 12</div><div style="position:absolute;left:306px;top:644px;width:42px;height:43px;background:#fff;border:1px solid #bbb;border-left:none;box-sizing:border-box"></div><svg style="position:absolute;left:316px;top:654px;" width="22" height="23" viewBox="0 0 22 23"><path d="M2,2 L5,5 L8,2" fill="none" stroke="#333" stroke-width="1.4"/><path d="M5,8 L5,22" stroke="#333" stroke-width="2"/><g stroke="#555" stroke-width="1.8"><path d="M10,3 L22,3 M8,9.5 L22,9.5 M8,15.5 L22,15.5 M8,21.5 L22,21.5"/></g></svg><div style="position:absolute;left:356px;top:100px;width:375px;height:732px;background:#fff;box-shadow:0 3px 12px rgba(0,0,0,0.28)"></div><div style="position:absolute;left:356px;top:135px;width:375px;height:1px;background:#cfcfcf"></div><div class="t" style="left:364.4px;top:110.7px;font-size:16.5px;line-height:16.5px;color:#303030;font-weight:bold;font-style:normal;letter-spacing:-0.74495703125px;">Change configuration</div><div style="position:absolute;left:661px;top:100px;width:35px;height:35px;background:#c7e6c6"></div><svg style="position:absolute;left:667px;top:108px;" width="23" height="19" viewBox="0 0 23 19"><path d="M2,9 L8.5,15.5 L21,2.5" fill="none" stroke="#fff" stroke-width="3.6"/></svg><svg style="position:absolute;left:705px;top:111px;" width="17" height="16" viewBox="0 0 17 16"><path d="M2,2 L15,14 M15,2 L2,14" stroke="#c62f37" stroke-width="3.6"/></svg><div class="t" style="left:364.4px;top:141.4px;font-size:20px;line-height:20px;color:#303030;font-weight:bold;font-style:normal;letter-spacing:-1.5560661764705883px;">MKCad - Gearboxes</div><svg style="position:absolute;left:364px;top:168px;" width="12" height="13" viewBox="0 0 12 13"><circle cx="3" cy="3" r="1.6" fill="none" stroke="#999" stroke-width="1"/><path d="M3,4.5 L3,12 M3,9 Q3,6 9,6 L9,12" fill="none" stroke="#999" stroke-width="1.2"/></svg><div class="t" style="left:380px;top:166.9px;font-size:15.5px;line-height:15.5px;color:#8a8a8a;font-weight:normal;font-style:normal;letter-spacing:-1.0502441406250007px;">V261</div><div style="position:absolute;left:356px;top:185px;width:375px;height:1px;background:#e3e3e3"></div><svg style="position:absolute;left:361px;top:209px;" width="13" height="10" viewBox="0 0 13 10"><path d="M1,1.5 L6.5,7.5 L12,1.5" fill="none" stroke="#333" stroke-width="2"/></svg><svg style="position:absolute;left:410px;top:197px;" width="31" height="31" viewBox="0 0 31 31"><path d="M1,6 L8,1 L24,1 L30,6 L30,30 L8,30 L1,24 Z" fill="#fff" stroke="#d0d0d0" stroke-width="1.3"/><path d="M1,6 L21,6 L30,1 M21,6 L21,30 M1,6 L1,24" fill="none" stroke="#d0d0d0" stroke-width="1.2"/><rect x="8" y="8" width="12" height="14" fill="#e9e9e9"/><path d="M8,1 L8,24 L30,24" fill="none" stroke="#d0d0d0" stroke-width="1"/></svg><div class="t" style="left:476.5px;top:204.1px;font-size:18px;line-height:18px;color:#bdbdbd;font-weight:normal;font-style:normal;letter-spacing:-1.3863235294117644px;">REV MAX Planetary</div><div class="t" style="left:412.6px;top:249.7px;font-size:16.5px;line-height:16.5px;color:#555;font-weight:normal;font-style:normal;letter-spacing:-1.1586523437499991px;">Gear Ratio</div><div class="t" style="left:495.7px;top:246.3px;font-size:18.5px;line-height:18.5px;color:#303030;font-weight:normal;font-style:normal;letter-spacing:-1.2267675781249991px;">25:1</div><div style="position:absolute;left:488px;top:270px;width:193px;height:1.3px;background:#c9c9c9"></div><svg style="position:absolute;left:663.5px;top:251px;" width="11" height="7" viewBox="0 0 11 7"><path d="M0,0 L11,0 L5.5,6.5 Z" fill="#333"/></svg><div class="t" style="left:412.6px;top:280.0px;font-size:16.5px;line-height:16.5px;color:#555;font-weight:normal;font-style:normal;letter-spacing:-0.8237031250000001px;">Motor Type</div><div class="t" style="left:501.7px;top:276.7px;font-size:18.5px;line-height:18.5px;color:#303030;font-weight:normal;font-style:normal;letter-spacing:-0.9678554687499996px;">NEO Vortex</div><div style="position:absolute;left:494px;top:301px;width:187px;height:1.3px;background:#c9c9c9"></div><svg style="position:absolute;left:663.5px;top:282.5px;" width="11" height="7" viewBox="0 0 11 7"><path d="M0,0 L11,0 L5.5,6.5 Z" fill="#333"/></svg><div class="t" style="left:412.6px;top:312.0px;font-size:16.5px;line-height:16.5px;color:#555;font-weight:normal;font-style:normal;letter-spacing:-0.8720377604166671px;">Output</div><div class="t" style="left:471.7px;top:307.1px;font-size:18.5px;line-height:18.5px;color:#303030;font-weight:normal;font-style:normal;letter-spacing:-1.4039023437500007px;">MAX 90 DEG</div><div style="position:absolute;left:464px;top:332px;width:217px;height:1.3px;background:#c9c9c9"></div><svg style="position:absolute;left:663.5px;top:314px;" width="11" height="7" viewBox="0 0 11 7"><path d="M0,0 L11,0 L5.5,6.5 Z" fill="#333"/></svg><div style="position:absolute;left:410px;top:335.5px;width:100.5px;height:36px;border:1px solid #d9d9d9;border-radius:3px;box-sizing:border-box"></div><div class="t" style="left:423.8px;top:346.7px;font-size:16.5px;line-height:16.5px;color:#c6c6c6;font-weight:normal;font-style:normal;letter-spacing:0.5253417968750007px;">Generate</div><div style="position:absolute;left:356px;top:798px;width:375px;height:34px;background:#ededed;border-top:1px solid #cfcfcf;box-sizing:border-box"></div><svg style="position:absolute;left:710px;top:811px;" width="16" height="16" viewBox="0 0 16 16"><circle cx="8" cy="8" r="8" fill="#a9a9a9"/><path d="M5.5,6 Q5.5,3.3 8,3.3 Q10.5,3.3 10.5,5.8 Q10.5,7.3 8.6,8 L8.6,9.8" fill="none" stroke="#fff" stroke-width="2"/><rect x="7.5" y="11" width="2.2" height="2.2" fill="#fff"/></svg><div style="position:absolute;left:49px;top:1255px;width:2348px;height:1px;background:#c4c4c4"></div><div style="position:absolute;left:50px;top:1256px;width:2347px;height:36px;background:#d7d7d7"></div><div style="position:absolute;left:0px;top:1292px;width:2398px;height:2px;background:#9a9a9a"></div><svg style="position:absolute;left:60px;top:1264px;" width="21" height="20" viewBox="0 0 21 20"><path d="M10.5,1 L10.5,19 M1,10 L20,10" stroke="#666" stroke-width="3.2"/></svg><div style="position:absolute;left:92.5px;top:1256px;width:1px;height:34px;background:#c8c8c8"></div><svg style="position:absolute;left:93px;top:1256px" width="215" height="34"><path d="M0,0 L42,0 L52,17 L42,34 L0,34 Z" fill="#ebebeb"/><path d="M42,0 L202,0 L213,17 L202,34 L42,34 L52,17 Z" fill="#fff"/><path d="M42,0 L52,17 L42,34" fill="none" stroke="#d0d0d0" stroke-width="1"/></svg><svg style="position:absolute;left:103.5px;top:1260px;" width="24" height="23" viewBox="0 0 24 24"><path d="M12,1 L23,12 L23,23 L15,23 L15,15 L9,15 L9,23 L1,23 L1,12 Z M17,3 L20,3 L20,8 L17,5 Z" fill="#666"/></svg><div class="t" style="left:163px;top:1264.0px;font-size:16.5px;line-height:16.5px;color:#555;font-weight:normal;font-style:normal;letter-spacing:0.32562255859375px;">Exercise 4 - Tel</div><div style="position:absolute;left:309px;top:1256px;width:250px;height:34px;background:#e8e8e8;border-radius:0 0 7px 7px"></div><svg style="position:absolute;left:324.5px;top:1263px" width="18" height="18" viewBox="0 0 18 18"><circle cx="9" cy="9" r="8.6" fill="#6a9bd8"/><path d="M9,3.5 L9,12 M5,8.5 L9,13 L13,8.5" fill="none" stroke="#fff" stroke-width="2.4"/></svg><svg style="position:absolute;left:347px;top:1261px" width="23" height="23" viewBox="0 0 23 23"><path d="M0.8,0.8 L17.4,0.8 L22.3,5.3 L22.3,22.4 L5.3,22.4 L0.8,17.6 Z" fill="#fff" stroke="#444" stroke-width="1.4" stroke-linejoin="miter"/><path d="M1,1 L11.3,1 L15.5,5.3 L5.3,5.3 Z" fill="#8f8f8f"/><path d="M1,1 L5.3,5.3 L5.3,15.4 L1,11.5 Z" fill="#999"/><rect x="5.3" y="5.3" width="10.2" height="10.1" fill="#9d9d9d" stroke="#444" stroke-width="1"/><path d="M0.8,0.8 L5.3,5.3 M11.3,0.8 L15.5,5.3 M15.5,5.3 L22.3,5.3 M5.3,15.4 L5.3,22.4 M0.8,11.3 L5.3,15.4" fill="none" stroke="#444" stroke-width="1"/></svg><div class="t" style="left:375px;top:1266.0px;font-size:16.5px;line-height:16.5px;color:#555;font-weight:normal;font-style:normal;letter-spacing:0.43017475328947424px;">Exercise 4 Assembly</div><div style="position:absolute;left:561px;top:1256px;width:249px;height:34px;background:#fff"></div><div style="position:absolute;left:563px;top:1287.5px;width:245px;height:2.5px;background:#1a50b4;border-radius:1px"></div><svg style="position:absolute;left:577.5px;top:1263px" width="18" height="18" viewBox="0 0 18 18"><circle cx="9" cy="9" r="8.6" fill="#6a9bd8"/><path d="M9,3.5 L9,12 M5,8.5 L9,13 L13,8.5" fill="none" stroke="#fff" stroke-width="2.4"/></svg><svg style="position:absolute;left:600px;top:1261px" width="23" height="23" viewBox="0 0 23 23"><path d="M0.8,0.8 L17.4,0.8 L22.3,5.3 L22.3,22.4 L5.3,22.4 L0.8,17.6 Z" fill="#fff" stroke="#444" stroke-width="1.4" stroke-linejoin="miter"/><path d="M1,1 L11.3,1 L15.5,5.3 L5.3,5.3 Z" fill="#8f8f8f"/><path d="M1,1 L5.3,5.3 L5.3,15.4 L1,11.5 Z" fill="#999"/><rect x="5.3" y="5.3" width="10.2" height="10.1" fill="#9d9d9d" stroke="#444" stroke-width="1"/><path d="M0.8,0.8 L5.3,5.3 M11.3,0.8 L15.5,5.3 M15.5,5.3 L22.3,5.3 M5.3,15.4 L5.3,22.4 M0.8,11.3 L5.3,15.4" fill="none" stroke="#444" stroke-width="1"/></svg><div class="t" style="left:628px;top:1266.0px;font-size:16.5px;line-height:16.5px;color:#444;font-weight:normal;font-style:normal;letter-spacing:0.2510286458333331px;">Exercise 4 Assembl...</div><div style="position:absolute;left:814px;top:1256px;width:250px;height:34px;background:#e8e8e8;border-radius:0 0 7px 7px"></div><svg style="position:absolute;left:828px;top:1261px" width="23" height="24" viewBox="0 0 23 24"><path d="M12,3 L17,1 L22,3 L22,21 L17,23 L12,21 Z" fill="#fff" stroke="#444" stroke-width="1.1"/><path d="M17,1 L17,23" stroke="#444"/><path d="M1,9 L6,7 L11,9 L11,21 L6,23 L1,21 Z" fill="#fff" stroke="#444" stroke-width="1.1"/><path d="M6,7 L6,23" stroke="#444"/></svg><div class="t" style="left:855.7px;top:1266.0px;font-size:16.5px;line-height:16.5px;color:#555;font-weight:normal;font-style:normal;letter-spacing:0.2569016335227277px;">Exercise 4 Part Studio</div><svg style="position:absolute;left:13px;top:1268px;" width="24" height="19" viewBox="0 0 24 20"><path d="M1,3 Q1,1 3,1 L22,1 Q23,1 23,3 L23,9 Q20,3 14,3.5 Q8,4 6,10 L1,10 Z" fill="#333"/><circle cx="14" cy="11" r="5" fill="none" stroke="#333" stroke-width="2.2"/><path d="M17.5,14.5 L22,19" stroke="#333" stroke-width="2.6"/></svg><svg style="position:absolute;left:2359px;top:1230px;" width="27" height="18" viewBox="0 0 27 18"><path d="M1.5,16.5 L1.5,13 A12,12 0 0 1 25.5,13 L25.5,16.5 Z" fill="none" stroke="#333" stroke-width="1.5"/><path d="M7,16 A6.5,6 0 0 1 20,16" fill="none" stroke="#333" stroke-width="1.5"/><path d="M4,12 A9.5,9.5 0 0 1 23,12" fill="none" stroke="#333" stroke-width="0.8" stroke-dasharray="1,1.3"/></svg><div style="position:absolute;left:2358.5px;top:473px;width:38px;height:248px;background:#fff;border:1px solid #bdbdbd;border-right:none;box-sizing:border-box"></div><div style="position:absolute;left:2358.5px;top:514px;width:38px;height:1px;background:#bdbdbd"></div><div style="position:absolute;left:2358.5px;top:555.5px;width:38px;height:1px;background:#bdbdbd"></div><div style="position:absolute;left:2358.5px;top:596px;width:38px;height:1px;background:#bdbdbd"></div><div style="position:absolute;left:2358.5px;top:637.5px;width:38px;height:1px;background:#bdbdbd"></div><div style="position:absolute;left:2358.5px;top:679px;width:38px;height:1px;background:#bdbdbd"></div><div style="position:absolute;left:2358.5px;top:734px;width:38px;height:125px;background:#fff;border:1px solid #bdbdbd;border-right:none;box-sizing:border-box"></div><div style="position:absolute;left:2358.5px;top:775px;width:38px;height:1px;background:#bdbdbd"></div><div style="position:absolute;left:2358.5px;top:816px;width:38px;height:1px;background:#bdbdbd"></div><svg style="position:absolute;left:2366px;top:482px;" width="24" height="24" viewBox="0 0 24 24"><rect x="2.5" y="3" width="19" height="18" rx="3" fill="none" stroke="#333" stroke-width="1.8"/><g fill="#333"><rect x="6" y="7" width="12" height="1.8"/><rect x="8" y="10.3" width="10" height="1.8"/><rect x="8" y="13.6" width="10" height="1.8"/><rect x="6" y="16.8" width="12" height="1.8"/></g></svg><svg style="position:absolute;left:2366px;top:523px;" width="24" height="24" viewBox="0 0 24 24"><g fill="#2255b8"><rect x="1" y="1" width="9" height="8"/></g><g stroke="#fff" stroke-width="0.7"><path d="M4,1 L4,9 M7,1 L7,9 M1,3.7 L10,3.7 M1,6.3 L10,6.3"/></g><path d="M6,10 L13,6 L22,10 L22,19 L14,23 L6,19 Z M6,10 L14,14 L22,10 M14,14 L14,23" fill="none" stroke="#333" stroke-width="1.4"/></svg><svg style="position:absolute;left:2366px;top:564px;" width="24" height="24" viewBox="0 0 24 24"><rect x="2" y="2" width="6" height="6" fill="#ddd" stroke="#555" stroke-width="1"/><path d="M7,9 L13,12" stroke="#2255b8" stroke-width="1.4" stroke-dasharray="1.5,1"/><path d="M10,15 L14,12 L17,12 L17,8 L22,8 L22,18 L18,22 L10,22 Z" fill="#fff" stroke="#444" stroke-width="1.1"/></svg><svg style="position:absolute;left:2366px;top:605px;" width="24" height="24" viewBox="0 0 24 24"><rect x="2" y="15" width="18" height="6" rx="1" fill="#fff" stroke="#333" stroke-width="1.4"/><rect x="14" y="2" width="7" height="14" fill="none" stroke="#2255b8" stroke-width="1.4" stroke-dasharray="2,1.5"/><circle cx="17.5" cy="18" r="3.5" fill="#fff" stroke="#2255b8" stroke-width="1.4"/><circle cx="17.5" cy="18" r="1.3" fill="none" stroke="#333"/></svg><svg style="position:absolute;left:2366px;top:646px;" width="24" height="24" viewBox="0 0 24 24"><path d="M12,1 L21,6 L22,17 L12,23 L2,17 L3,6 Z" fill="#777"/><path d="M12,1 L12,12 L3,6 Z" fill="#8fc1ea"/><path d="M12,12 L2,17 L3,6 Z" fill="#2d6fc7"/><path d="M12,12 L12,23 L2,17 Z" fill="#1b4ca0"/><path d="M12,1 L21,6 L12,12 Z" fill="#cfcfcf"/><path d="M12,12 L21,6 L22,17 Z" fill="#9e9e9e"/><path d="M12,12 L22,17 L12,23 Z" fill="#b5b5b5"/></svg><svg style="position:absolute;left:2366px;top:688px;" width="24" height="24" viewBox="0 0 24 24"><g fill="#333"><rect x="4" y="1" width="9" height="8"/></g><g stroke="#fff" stroke-width="0.7"><path d="M7,1 L7,9 M10,1 L10,9 M4,3.7 L13,3.7 M4,6.3 L13,6.3"/></g><path d="M4,6 Q0,13 4,22 M20,6 Q24,13 20,22" fill="none" stroke="#333" stroke-width="2.2"/><path d="M8,11 Q13,10 13,15 Q13,20 17,20 M17,11 Q12,15 8,20" fill="none" stroke="#333" stroke-width="2.4"/></svg><svg style="position:absolute;left:2364px;top:740px;" width="29" height="29" viewBox="0 0 29 29"><rect x="0" y="0" width="29" height="29" rx="4" fill="#ddd"/><circle cx="14.5" cy="14.5" r="10" fill="none" stroke="#4caf50" stroke-width="6" stroke-dasharray="15.7,15.7" stroke-dashoffset="23.5"/><circle cx="14.5" cy="14.5" r="10" fill="none" stroke="#29a8e0" stroke-width="6" stroke-dasharray="0,15.7,15.7,31.4" stroke-dashoffset="23.5"/><circle cx="14.5" cy="14.5" r="10" fill="none" stroke="#f0a030" stroke-width="6" stroke-dasharray="0,31.4,15.7,15.7" stroke-dashoffset="23.5"/><circle cx="14.5" cy="14.5" r="10" fill="none" stroke="#e04040" stroke-width="6" stroke-dasharray="0,47.1,15.7,0" stroke-dashoffset="23.5"/><circle cx="14.5" cy="14.5" r="6.5" fill="#fff"/></svg><svg style="position:absolute;left:2364px;top:781px;" width="29" height="29" viewBox="0 0 29 29"><rect x="0" y="0" width="29" height="29" rx="4" fill="#ddd"/><rect x="2.5" y="3" width="24" height="23" fill="#1747b8" stroke="#111" stroke-width="1.3"/><text x="14.5" y="21" font-family="Liberation Serif" font-weight="bold" font-size="15" fill="#fff" text-anchor="middle">MK</text></svg><svg style="position:absolute;left:2364px;top:822px;" width="29" height="29" viewBox="0 0 29 29"><rect x="0" y="0" width="29" height="29" rx="4" fill="#ddd"/><path d="M14.5,14.5 L4,4 A14,14 0 0 1 25,4 Z" fill="#4caf50"/><path d="M14.5,14.5 L25,4 A14,14 0 0 1 25,25 Z" fill="#29a8e0"/><path d="M14.5,14.5 L25,25 A14,14 0 0 1 4,25 Z" fill="#f0a030"/><path d="M14.5,14.5 L4,25 A14,14 0 0 1 4,4 Z" fill="#e04040"/><circle cx="14.5" cy="14.5" r="12.5" fill="none" stroke="#ddd" stroke-width="1.5"/></svg><svg style="position:absolute;left:2180px;top:105px" width="210" height="205" viewBox="2180 105 210 205">
<path d="M2276.5,126.7 L2285.2,115 L2294,126.7 Z" fill="#dfe5ec"/>
<path d="M2276.5,290 L2285.2,301.5 L2294,290 Z" fill="#dfe5ec"/>
<path d="M2205,199 L2191.5,208.3 L2205,217.5 Z" fill="#dfe5ec"/>
<path d="M2366,199 L2380,208.3 L2366,217.5 Z" fill="#dfe5ec"/>
<path d="M2260,129 Q2235,137 2224,150" fill="none" stroke="#dfe5ec" stroke-width="5"/>
<path d="M2218.5,157 L2219,142 L2231,152 Z" fill="#dfe5ec"/>
<path d="M2310,129 Q2335,137 2346,150" fill="none" stroke="#dfe5ec" stroke-width="5"/>
<path d="M2352.5,157 L2352,142 L2340,152 Z" fill="#dfe5ec"/>
<path d="M2285,158 L2333,176 Q2337,178 2337,183 L2336,230 Q2336,236 2331,238 L2287,260 Q2284,261 2281,260 L2240,238 Q2236,236 2236,231 L2236,183 Q2236,178 2241,176 Z" fill="#dfe5ec"/>
<path d="M2286,168 L2325,182 L2286,198 L2247,182 Z" fill="#fbfcfd"/>
<path d="M2244,190 L2280,206 L2280,253 L2244,233 Z" fill="#fbfcfd"/>
<path d="M2328,190 L2292,206 L2292,253 L2328,233 Z" fill="#fbfcfd"/>
<circle cx="2279" cy="203" r="7" fill="#fbfcfd"/>
<text x="2257" y="222" font-family="Liberation Sans" font-size="11" fill="#555" transform="rotate(28 2257 222)">Back</text>
<text x="2296" y="231" font-family="Liberation Sans" font-size="12" fill="#555" transform="rotate(-25 2296 231)">Left</text>
<text x="2282" y="178" font-family="Liberation Sans" font-size="9" fill="#666" transform="rotate(200 2285 178)">Top</text>
<line x1="2338.3" y1="182" x2="2338.3" y2="245.5" stroke="#2a2ad8" stroke-width="1.6"/>
<line x1="2338.3" y1="245.5" x2="2278.5" y2="266" stroke="#2ca02c" stroke-width="1.6"/>
<line x1="2338.3" y1="245.5" x2="2297" y2="218" stroke="#e88a8a" stroke-width="1.3"/>
<line x1="2338.3" y1="245.5" x2="2320" y2="233" stroke="#d04040" stroke-width="1.6"/>
<text x="2333" y="177" font-family="Liberation Sans" font-size="14" fill="#2a2ad8">Z</text>
<text x="2262.5" y="276" font-family="Liberation Sans" font-size="14" fill="#2ca02c">Y</text>
<text x="2285" y="219" font-family="Liberation Sans" font-size="11" fill="#f2b5b5">X</text>
<path d="M2341,280.5 L2352,286 L2352,298 L2341,302.5 L2330,298 L2330,286 Z" fill="#c8c8c8" stroke="#333" stroke-width="1.1"/>
<path d="M2330,286 L2341,291 L2352,286 M2341,291 L2341,302.5" fill="none" stroke="#333" stroke-width="1"/>
<path d="M2330,286 L2341,291 L2341,302.5 L2330,298 Z" fill="#9a9a9a"/>
<path d="M2341,291 L2352,286 L2352,298 L2341,302.5 Z" fill="#d8d8d8"/>
<path d="M2330,286 L2341,280.5 L2352,286 L2341,291 Z" fill="#fafafa"/>
<path d="M2330,286 L2341,280.5 L2352,286 L2352,298 L2341,302.5 L2330,298 Z M2330,286 L2341,291 L2352,286 M2341,291 L2341,302.5" fill="none" stroke="#333" stroke-width="1.1"/>
<path d="M2363.4,289 L2372,289 L2367.7,294 Z" fill="#333"/>
</svg></body></html>
